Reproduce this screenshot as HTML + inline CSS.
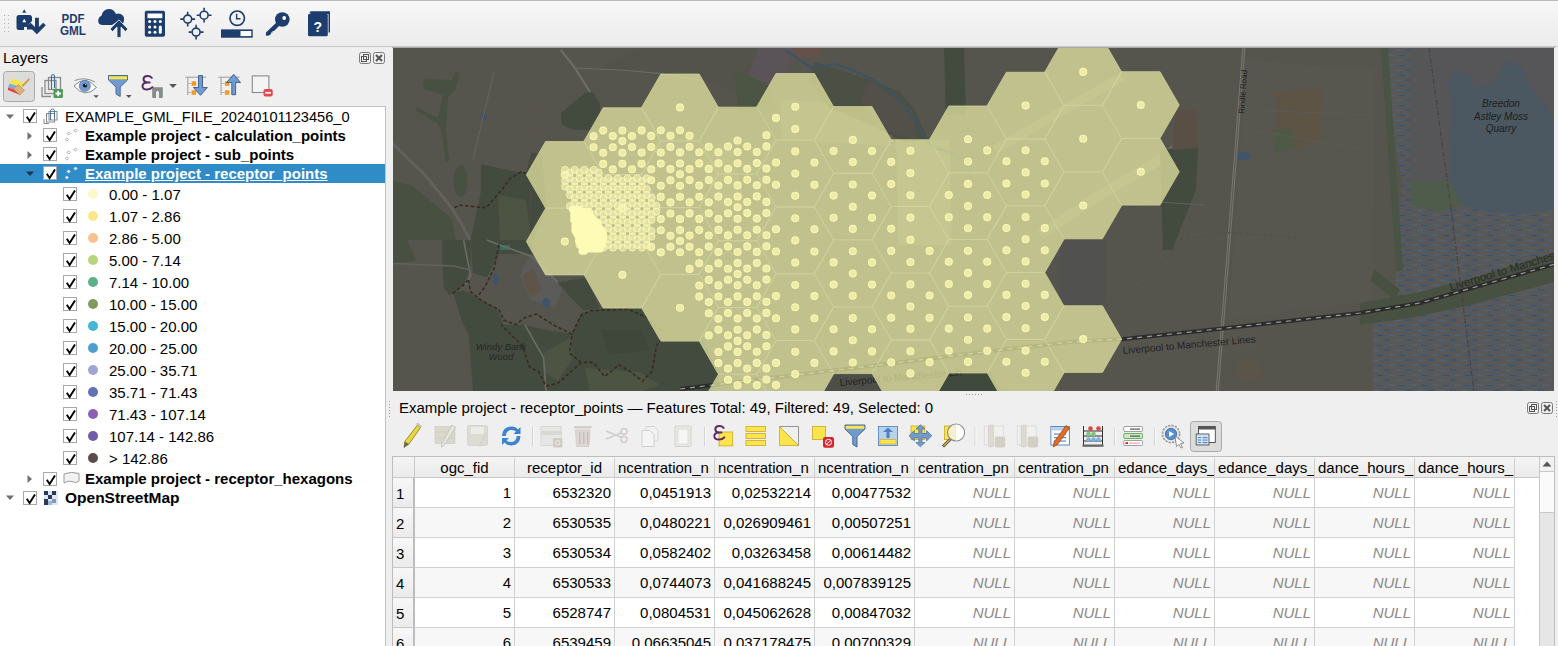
<!DOCTYPE html><html><head><meta charset="utf-8"><style>
*{margin:0;padding:0;box-sizing:border-box}
html,body{width:1558px;height:646px;overflow:hidden;background:#efefef;font-family:"Liberation Sans",sans-serif;color:#000}
.a{position:absolute}
.t{position:absolute;white-space:nowrap;font-size:15px;line-height:18px}
.b{font-weight:bold}
.cb{position:absolute;width:14px;height:14px;border:1px solid #a9a9a9;background:#fff}
.cb svg{position:absolute;left:1px;top:1px}
.lg{position:absolute;width:11px;height:11px;border-radius:50%}
.hc{position:absolute;top:0;height:20px;border-right:1px solid #cfcfcf;overflow:hidden;white-space:nowrap;font-size:15px;line-height:20px}
.cell{position:absolute;height:30px;border-right:1px solid #d0d0d0;border-bottom:1px solid #d0d0d0;font-size:15px;line-height:30px;text-align:right;padding-right:4px;white-space:nowrap;overflow:hidden}
.nul{color:#8b8b8b;font-style:italic}
</style></head><body>
<div class="a" style="left:0;top:0;width:1558px;height:47px;background:linear-gradient(#f7f7f7,#ececec);border-top:1px solid #bcbcbc;border-bottom:1px solid #c8c8c8"></div>
<svg class="a" style="left:0;top:0" width="340" height="46" viewBox="0 0 340 46"><rect x="4" y="15" width="1" height="1" fill="#b0b0b0"/><rect x="8" y="15" width="1" height="1" fill="#b0b0b0"/><rect x="4" y="19" width="1" height="1" fill="#b0b0b0"/><rect x="8" y="19" width="1" height="1" fill="#b0b0b0"/><rect x="4" y="23" width="1" height="1" fill="#b0b0b0"/><rect x="8" y="23" width="1" height="1" fill="#b0b0b0"/><rect x="4" y="27" width="1" height="1" fill="#b0b0b0"/><rect x="8" y="27" width="1" height="1" fill="#b0b0b0"/><rect x="4" y="31" width="1" height="1" fill="#b0b0b0"/><rect x="8" y="31" width="1" height="1" fill="#b0b0b0"/><path d="M22.3 12.7 L24.2 9.2 L26.2 12.7Z" fill="#1c3d6e"/><path d="M19 15 H29.5 Q32 15 32 18 V21 L28.5 24.5 L33 29.5 H27 V27 H24 V30 H19 Q16.5 30 16.5 27.5 V17.5 Q16.5 15 19 15Z" fill="#1c3d6e"/><path d="M22.3 22.3 L24.2 18.8 L26.2 22.3Z" fill="#fff"/><path d="M35 17.7 H38.9 V27 L43.2 22.7 L45.8 25.3 L36.9 34.2 L28 25.3 L30.6 22.7 L35 27Z" fill="#1c3d6e"/><text x="73" y="22.7" font-family="Liberation Sans" font-weight="bold" font-size="12.5" fill="#1c3d6e" text-anchor="middle" textLength="23" lengthAdjust="spacingAndGlyphs">PDF</text><text x="73" y="34.7" font-family="Liberation Sans" font-weight="bold" font-size="12.5" fill="#1c3d6e" text-anchor="middle" textLength="26" lengthAdjust="spacingAndGlyphs">GML</text><path d="M103 25 Q98 25 98.2 20.5 Q98.5 17 101.5 15.7 Q103 9 108.8 8.9 Q114 9 116 14 Q118 13.2 120.5 14 Q124.5 15.5 124 20 Q123.8 23 122 24 L118.9 20.5 L112 25Z" fill="#1c3d6e"/><path d="M117 37.4 H121 V27 L125.3 31.6 L128 29 L118.9 19.8 L110 29 L112.6 31.6 L117 27Z" fill="#1c3d6e" stroke="#f3f3f3" stroke-width="0.8"/><rect x="144.8" y="10.8" width="20.2" height="25.9" rx="1.8" fill="#1c3d6e"/><rect x="147.5" y="13.5" width="14.8" height="4.7" fill="#fff"/><circle cx="149.6" cy="21.6" r="1.5" fill="#fff"/><circle cx="155.0" cy="21.6" r="1.5" fill="#fff"/><circle cx="149.6" cy="27.0" r="1.5" fill="#fff"/><circle cx="155.0" cy="27.0" r="1.5" fill="#fff"/><circle cx="149.6" cy="32.2" r="1.5" fill="#fff"/><circle cx="155.0" cy="32.2" r="1.5" fill="#fff"/><circle cx="160.3" cy="21.6" r="1.5" fill="#fff"/><rect x="158.8" y="25.6" width="3" height="8.2" rx="1.5" fill="#fff"/><circle cx="187.7" cy="19.1" r="4" fill="none" stroke="#1c3d6e" stroke-width="1.6"/><path d="M180.3 19.1 h3 M192.1 19.1 h3 M187.7 11.7 v3 M187.7 23.5 v3" stroke="#1c3d6e" stroke-width="1.6"/><circle cx="204.1" cy="15.2" r="4" fill="none" stroke="#1c3d6e" stroke-width="1.6"/><path d="M196.7 15.2 h3 M208.5 15.2 h3 M204.1 7.8 v3 M204.1 19.6 v3" stroke="#1c3d6e" stroke-width="1.6"/><circle cx="196.1" cy="32.1" r="4" fill="none" stroke="#1c3d6e" stroke-width="1.6"/><path d="M188.7 32.1 h3 M200.5 32.1 h3 M196.1 24.7 v3 M196.1 36.5 v3" stroke="#1c3d6e" stroke-width="1.6"/><circle cx="237.2" cy="18.2" r="7.2" fill="none" stroke="#1c3d6e" stroke-width="1.7"/><path d="M236.6 13.8 V18.8 H240.5" fill="none" stroke="#1c3d6e" stroke-width="1.4"/><rect x="221" y="29.4" width="31.7" height="8.3" fill="#1c3d6e"/><rect x="240.5" y="31" width="10.8" height="5.1" fill="#fff"/><circle cx="282.3" cy="19.5" r="7.3" fill="#1c3d6e"/><circle cx="284.2" cy="18" r="1.9" fill="#fff"/><path d="M277.5 21.5 L280.5 24.5 L274 31 L272.5 31 L272.5 32.5 L271 32.5 L271 34 L268.5 35.8 L265.8 35.5 L266 32.5Z" fill="#1c3d6e"/><path d="M309.5 12.2 Q310 11.3 311.5 11.3 H330 V32.5 H328.5 V14 H311 Z" fill="#1c3d6e"/><rect x="308" y="13.8" width="19.8" height="22.5" rx="1.5" fill="#1c3d6e"/><text x="317.8" y="31.5" font-family="Liberation Sans" font-weight="bold" font-size="14" fill="#fff" text-anchor="middle">?</text></svg>
<div class="t" style="left:3px;top:49px;font-size:15px;line-height:18px">Layers</div>
<svg class="a" style="left:359px;top:52px" width="26" height="13" viewBox="0 0 26 13"><rect x="0.5" y="0.5" width="11" height="11" rx="2" fill="none" stroke="#7a7a7a"/><rect x="2.5" y="4.5" width="5" height="5" fill="none" stroke="#555"/><rect x="4.5" y="2.5" width="5" height="5" fill="none" stroke="#555"/><rect x="14.5" y="0.5" width="11" height="11" rx="2" fill="none" stroke="#7a7a7a"/><path d="M17 3 L23 9 M23 3 L17 9" stroke="#555" stroke-width="2"/></svg>
<svg class="a" style="left:0;top:66px" width="290" height="40" viewBox="0 66 290 40"><rect x="3.5" y="71.5" width="31" height="30" rx="3" fill="#dcdcdc" stroke="#a9a9a9"/><path d="M12 78.6 L23 82 L20.5 87 L9.5 83.5Z" fill="#f2e64c"/><path d="M9.5 83.5 L20.5 87 L18.5 91 L8 87.5Z" fill="#86a9d6"/><path d="M8 87.5 L18.5 91 L19.5 94.8 L8 90Z" fill="#e8403d"/><path d="M28.8 78.2 L30 79.5 L23 87 L21.5 85.5Z" fill="#d49a45"/><path d="M18.5 84.5 L24.5 90.5 L19.8 95 L13.5 89Z" fill="#d8b27a" stroke="#b88a4a" stroke-width="0.6"/><path d="M42 87 V96.5 H51" fill="none" stroke="#8a8a8a" stroke-width="1.3"/><rect x="45" y="80.5" width="11" height="13" fill="none" stroke="#8a8a8a" stroke-width="1.3"/><rect x="48.5" y="77.5" width="12" height="12" fill="none" stroke="#8a8a8a" stroke-width="1.3"/><path d="M51.5 89 V76.5 Q51.5 74.5 53 74.5 Q54.5 74.5 54.5 76.5 V88" fill="none" stroke="#3e6a9c" stroke-width="1.1"/><rect x="53.5" y="89" width="9.4" height="9" rx="1.2" fill="#4c9a55"/><path d="M58.2 90.8 V96.3 M55.5 93.5 H61" stroke="#fff" stroke-width="1.8"/><path d="M74 86 Q85 74 96.5 87.5 Q85 99 74 86Z" fill="#fff" stroke="#777" stroke-width="0.9"/><path d="M74.5 80.5 Q85 76.5 95 82" fill="none" stroke="#777" stroke-width="0.8"/><circle cx="84.8" cy="85.9" r="5.6" fill="#6f9bd2" stroke="#4a6e9c" stroke-width="0.6"/><circle cx="85" cy="85.5" r="2.1" fill="#111"/><circle cx="85.7" cy="84.7" r="0.6" fill="#fff"/><path d="M93.4 95.2 H98.8 L96.1 98Z" fill="#555"/><path d="M108.5 75.5 H127.5 V80 L120.2 87 V96.5 L116 94 V87 L108.5 80Z" fill="#6f9bd2" stroke="#3f5f8a" stroke-width="0.9"/><rect x="109" y="76.3" width="18" height="3" fill="#f5e74a"/><path d="M126 95 H131.6 L128.8 98Z" fill="#555"/><path d="M152.2 87.2 H162.8 V97 Q162.8 98 161.8 98 H159 V92 L157.5 90.5 L156 92 V98 H153.2 Q152.2 98 152.2 97Z" fill="#888c88"/><path transform="translate(141.5,75.2) scale(1.000,1.000)" d="M10.3 2.6 Q8.5 0.6 5.8 0.8 Q2 1 2 4.2 Q2.2 7 6 7.3 H8.2 M6 7.3 Q1 7.4 1 11 Q1.2 14.3 5.6 14.3 Q9 14.3 11 12" fill="none" stroke="#5b2a66" stroke-width="2" stroke-linecap="round"/><path d="M169.1 84 H176.8 L173 88Z" fill="#555"/><path d="M185.3 77.2 H206.3 M187.8 77.5 V95" stroke="#9a9a9a" stroke-width="1"/><path d="M187.8 83.5 H191.3 M187.8 92.5 H191.3" stroke="#b0b0b0" stroke-width="0.8"/><rect x="191.6" y="81.3" width="4.5" height="4.5" fill="#f59a1e"/><rect x="191.6" y="90.3" width="4.5" height="4.5" fill="#f59a1e"/><path d="M218.6 77.2 H239.6 M221.1 77.5 V95" stroke="#9a9a9a" stroke-width="1"/><path d="M221.1 83.5 H224.6 M221.1 92.5 H224.6" stroke="#b0b0b0" stroke-width="0.8"/><rect x="224.9" y="81.3" width="4.5" height="4.5" fill="#f59a1e"/><rect x="224.9" y="90.3" width="4.5" height="4.5" fill="#f59a1e"/><path d="M198.5 75.6 H202.5 V87.5 H207.4 L200.5 95.3 L193.4 87.5 H198.5Z" fill="#6f9bd2" stroke="#3a5a80" stroke-width="0.9"/><path d="M231.8 94.7 H235.6 V82.5 H240.6 L233.7 74.3 L226.6 82.5 H231.8Z" fill="#6f9bd2" stroke="#3a5a80" stroke-width="0.9"/><rect x="252.3" y="75.9" width="16.6" height="16.6" fill="#f4f4f4" stroke="#8a8a8a" stroke-width="1.1"/><rect x="263.5" y="89" width="9.2" height="7.6" rx="2" fill="#e8454c"/><rect x="265.3" y="91.9" width="5.6" height="1.8" fill="#fff"/></svg>
<div class="a" style="left:0;top:106px;width:386px;height:540px;background:#fff;border-top:1px solid #c2c2c2;border-right:1px solid #c2c2c2"></div>
<svg class="a" style="left:6px;top:114px" width="9" height="6"><path d="M0 0.5 H8 L4 5Z" fill="#6f6f6f"/></svg><div class="cb" style="left:23px;top:109px"><svg width="12" height="12" viewBox="0 0 12 12"><path d="M1.8 5.8 L4.6 10 L10 1.4" fill="none" stroke="#000" stroke-width="1.9" stroke-linejoin="miter"/></svg></div><svg class="a" style="left:43px;top:108px" width="15" height="16" viewBox="0 0 15 16"><path d="M1 11 V15.5 H6" fill="none" stroke="#888" stroke-width="1"/><rect x="3.5" y="5.5" width="8" height="8.5" fill="none" stroke="#888"/><rect x="6" y="3.5" width="8" height="8.5" fill="none" stroke="#888"/><path d="M7.5 12 V3 Q7.5 1 9.5 1 Q11.5 1 11.5 3 V10.5" fill="none" stroke="#3e6a9c" stroke-width="0.9"/></svg><div class="t" style="left:65px;top:108px;font-size:14.6px">EXAMPLE_GML_FILE_20240101123456_0</div><svg class="a" style="left:27px;top:132px" width="6" height="9"><path d="M0.5 0 V8 L5 4Z" fill="#6f6f6f"/></svg><div class="cb" style="left:43px;top:128px"><svg width="12" height="12" viewBox="0 0 12 12"><path d="M1.8 5.8 L4.6 10 L10 1.4" fill="none" stroke="#000" stroke-width="1.9" stroke-linejoin="miter"/></svg></div><svg class="a" style="left:65px;top:128px" width="14" height="14" viewBox="0 0 14 14"><path d="M10.5 0.9 l1.6 1.6 l-1.6 1.6 l-1.6 -1.6Z" fill="#fff" stroke="#888" stroke-width="0.7"/><path d="M3.6 3.9 l1.6 1.6 l-1.6 1.6 l-1.6 -1.6Z" fill="#fff" stroke="#888" stroke-width="0.7"/><path d="M1.8 9.9 l1.6 1.6 l-1.6 1.6 l-1.6 -1.6Z" fill="#fff" stroke="#888" stroke-width="0.7"/></svg><div class="t b" style="left:85px;top:127px;font-size:15px">Example project - calculation_points</div><svg class="a" style="left:27px;top:151px" width="6" height="9"><path d="M0.5 0 V8 L5 4Z" fill="#6f6f6f"/></svg><div class="cb" style="left:43px;top:147px"><svg width="12" height="12" viewBox="0 0 12 12"><path d="M1.8 5.8 L4.6 10 L10 1.4" fill="none" stroke="#000" stroke-width="1.9" stroke-linejoin="miter"/></svg></div><svg class="a" style="left:65px;top:147px" width="14" height="14" viewBox="0 0 14 14"><path d="M10.5 0.9 l1.6 1.6 l-1.6 1.6 l-1.6 -1.6Z" fill="#fff" stroke="#888" stroke-width="0.7"/><path d="M3.6 3.9 l1.6 1.6 l-1.6 1.6 l-1.6 -1.6Z" fill="#fff" stroke="#888" stroke-width="0.7"/><path d="M1.8 9.9 l1.6 1.6 l-1.6 1.6 l-1.6 -1.6Z" fill="#fff" stroke="#888" stroke-width="0.7"/></svg><div class="t b" style="left:85px;top:146px;font-size:15px">Example project - sub_points</div><div class="a" style="left:0;top:164px;width:385px;height:19px;background:#308cc6"></div><svg class="a" style="left:26px;top:171px" width="9" height="6"><path d="M0 0.5 H8 L4 5Z" fill="#1d3650"/></svg><div class="cb" style="left:43px;top:166px"><svg width="12" height="12" viewBox="0 0 12 12"><path d="M1.8 5.8 L4.6 10 L10 1.4" fill="none" stroke="#000" stroke-width="1.9" stroke-linejoin="miter"/></svg></div><svg class="a" style="left:65px;top:166px" width="14" height="14" viewBox="0 0 14 14"><path d="M10.5 0.9 l1.6 1.6 l-1.6 1.6 l-1.6 -1.6Z" fill="#e8e8e8" stroke="#e8e8e8" stroke-width="0.7"/><path d="M3.6 3.9 l1.6 1.6 l-1.6 1.6 l-1.6 -1.6Z" fill="#e8e8e8" stroke="#e8e8e8" stroke-width="0.7"/><path d="M1.8 9.9 l1.6 1.6 l-1.6 1.6 l-1.6 -1.6Z" fill="#e8e8e8" stroke="#e8e8e8" stroke-width="0.7"/></svg><div class="t b" style="left:85px;top:165px;font-size:15px;color:#fff;text-decoration:underline">Example project - receptor_points</div><div class="cb" style="left:63px;top:187px"><svg width="12" height="12" viewBox="0 0 12 12"><path d="M1.8 5.8 L4.6 10 L10 1.4" fill="none" stroke="#000" stroke-width="1.9" stroke-linejoin="miter"/></svg></div><div class="lg" style="left:88px;top:189px;width:10px;height:10px;background:#fdf9c9"></div><div class="t" style="left:109px;top:186px;font-size:15px">0.00 - 1.07</div><div class="cb" style="left:63px;top:209px"><svg width="12" height="12" viewBox="0 0 12 12"><path d="M1.8 5.8 L4.6 10 L10 1.4" fill="none" stroke="#000" stroke-width="1.9" stroke-linejoin="miter"/></svg></div><div class="lg" style="left:88px;top:211px;width:10px;height:10px;background:#fce68c"></div><div class="t" style="left:109px;top:208px;font-size:15px">1.07 - 2.86</div><div class="cb" style="left:63px;top:231px"><svg width="12" height="12" viewBox="0 0 12 12"><path d="M1.8 5.8 L4.6 10 L10 1.4" fill="none" stroke="#000" stroke-width="1.9" stroke-linejoin="miter"/></svg></div><div class="lg" style="left:88px;top:233px;width:10px;height:10px;background:#f7c190"></div><div class="t" style="left:109px;top:230px;font-size:15px">2.86 - 5.00</div><div class="cb" style="left:63px;top:253px"><svg width="12" height="12" viewBox="0 0 12 12"><path d="M1.8 5.8 L4.6 10 L10 1.4" fill="none" stroke="#000" stroke-width="1.9" stroke-linejoin="miter"/></svg></div><div class="lg" style="left:88px;top:255px;width:10px;height:10px;background:#b6d67c"></div><div class="t" style="left:109px;top:252px;font-size:15px">5.00 - 7.14</div><div class="cb" style="left:63px;top:275px"><svg width="12" height="12" viewBox="0 0 12 12"><path d="M1.8 5.8 L4.6 10 L10 1.4" fill="none" stroke="#000" stroke-width="1.9" stroke-linejoin="miter"/></svg></div><div class="lg" style="left:88px;top:277px;width:10px;height:10px;background:#5bb08a"></div><div class="t" style="left:109px;top:274px;font-size:15px">7.14 - 10.00</div><div class="cb" style="left:63px;top:297px"><svg width="12" height="12" viewBox="0 0 12 12"><path d="M1.8 5.8 L4.6 10 L10 1.4" fill="none" stroke="#000" stroke-width="1.9" stroke-linejoin="miter"/></svg></div><div class="lg" style="left:88px;top:299px;width:10px;height:10px;background:#7f9b5f"></div><div class="t" style="left:109px;top:296px;font-size:15px">10.00 - 15.00</div><div class="cb" style="left:63px;top:319px"><svg width="12" height="12" viewBox="0 0 12 12"><path d="M1.8 5.8 L4.6 10 L10 1.4" fill="none" stroke="#000" stroke-width="1.9" stroke-linejoin="miter"/></svg></div><div class="lg" style="left:88px;top:321px;width:10px;height:10px;background:#45b5d8"></div><div class="t" style="left:109px;top:318px;font-size:15px">15.00 - 20.00</div><div class="cb" style="left:63px;top:341px"><svg width="12" height="12" viewBox="0 0 12 12"><path d="M1.8 5.8 L4.6 10 L10 1.4" fill="none" stroke="#000" stroke-width="1.9" stroke-linejoin="miter"/></svg></div><div class="lg" style="left:88px;top:343px;width:10px;height:10px;background:#4e9ed2"></div><div class="t" style="left:109px;top:340px;font-size:15px">20.00 - 25.00</div><div class="cb" style="left:63px;top:363px"><svg width="12" height="12" viewBox="0 0 12 12"><path d="M1.8 5.8 L4.6 10 L10 1.4" fill="none" stroke="#000" stroke-width="1.9" stroke-linejoin="miter"/></svg></div><div class="lg" style="left:88px;top:365px;width:10px;height:10px;background:#a0a3d5"></div><div class="t" style="left:109px;top:362px;font-size:15px">25.00 - 35.71</div><div class="cb" style="left:63px;top:385px"><svg width="12" height="12" viewBox="0 0 12 12"><path d="M1.8 5.8 L4.6 10 L10 1.4" fill="none" stroke="#000" stroke-width="1.9" stroke-linejoin="miter"/></svg></div><div class="lg" style="left:88px;top:387px;width:10px;height:10px;background:#6173b4"></div><div class="t" style="left:109px;top:384px;font-size:15px">35.71 - 71.43</div><div class="cb" style="left:63px;top:407px"><svg width="12" height="12" viewBox="0 0 12 12"><path d="M1.8 5.8 L4.6 10 L10 1.4" fill="none" stroke="#000" stroke-width="1.9" stroke-linejoin="miter"/></svg></div><div class="lg" style="left:88px;top:409px;width:10px;height:10px;background:#8b60b5"></div><div class="t" style="left:109px;top:406px;font-size:15px">71.43 - 107.14</div><div class="cb" style="left:63px;top:429px"><svg width="12" height="12" viewBox="0 0 12 12"><path d="M1.8 5.8 L4.6 10 L10 1.4" fill="none" stroke="#000" stroke-width="1.9" stroke-linejoin="miter"/></svg></div><div class="lg" style="left:88px;top:431px;width:10px;height:10px;background:#6e5da8"></div><div class="t" style="left:109px;top:428px;font-size:15px">107.14 - 142.86</div><div class="cb" style="left:63px;top:451px"><svg width="12" height="12" viewBox="0 0 12 12"><path d="M1.8 5.8 L4.6 10 L10 1.4" fill="none" stroke="#000" stroke-width="1.9" stroke-linejoin="miter"/></svg></div><div class="lg" style="left:88px;top:453px;width:10px;height:10px;background:#5d4d4a"></div><div class="t" style="left:109px;top:450px;font-size:15px">&gt; 142.86</div><svg class="a" style="left:27px;top:475px" width="6" height="9"><path d="M0.5 0 V8 L5 4Z" fill="#6f6f6f"/></svg><div class="cb" style="left:43px;top:472px"><svg width="12" height="12" viewBox="0 0 12 12"><path d="M1.8 5.8 L4.6 10 L10 1.4" fill="none" stroke="#000" stroke-width="1.9" stroke-linejoin="miter"/></svg></div><svg class="a" style="left:63px;top:472px" width="17" height="13" viewBox="0 0 17 13"><path d="M1 2 Q8 -1 16 1.5 V9 Q13 12 9 9.5 Q5 8 1 11Z" fill="#f2f2f2" stroke="#9a9a9a" stroke-width="1"/></svg><div class="t b" style="left:85px;top:470px;font-size:15px">Example project - receptor_hexagons</div><svg class="a" style="left:6px;top:495px" width="9" height="6"><path d="M0 0.5 H8 L4 5Z" fill="#6f6f6f"/></svg><div class="cb" style="left:23px;top:491px"><svg width="12" height="12" viewBox="0 0 12 12"><path d="M1.8 5.8 L4.6 10 L10 1.4" fill="none" stroke="#000" stroke-width="1.9" stroke-linejoin="miter"/></svg></div><svg class="a" style="left:44px;top:491px" width="14" height="14" viewBox="0 0 14 14"><rect x="0" y="0" width="14" height="14" fill="#dfe8f2"/><rect x="0" y="0" width="4" height="4" fill="#2a3b5a"/><rect x="8" y="0" width="4" height="4" fill="#2a3b5a"/><rect x="4" y="4" width="4" height="4" fill="#2a3b5a"/><rect x="0" y="8" width="4" height="6" fill="#2a3b5a"/><rect x="8" y="8" width="4" height="4" fill="#7a98c0"/><rect x="4" y="10" width="4" height="4" fill="#9fb6d6"/></svg><div class="t b" style="left:65px;top:489px;font-size:15.5px">OpenStreetMap</div>
<div class="a" style="left:393px;top:48px;width:1161px;height:343px;overflow:hidden"><svg width="1161" height="343" viewBox="0 0 1161 343" style="position:absolute;left:0;top:0">
<defs><pattern id="marsh" width="22" height="10" patternUnits="userSpaceOnUse"><rect width="22" height="10" fill="#585858"/><line x1="1" y1="2" x2="7" y2="2" stroke="#2a5282" stroke-width="1.1"/><line x1="12" y1="2.5" x2="18" y2="2.5" stroke="#4e6479" stroke-width="1.1"/><line x1="6" y1="7" x2="12" y2="7" stroke="#4e6479" stroke-width="1.1"/><line x1="16" y1="7.5" x2="22" y2="7.5" stroke="#2a5282" stroke-width="1.1"/></pattern><clipPath id="mc"><rect width="1161" height="343"/></clipPath></defs>
<rect width="1161" height="343" fill="#55554e"/>
<polygon points="852.0,12.0 982.0,22.0 979.0,252.0 835.0,272.0 847.0,102.0" fill="#57574f"/>
<polygon points="247.0,0.0 367.0,0.0 357.0,47.0 307.0,32.0 207.0,20.0" fill="#53534c"/>
<path d="M30.0,34.0 33.0,31.0 59.0,32.0 62.0,24.0 67.0,25.0 63.0,40.0 55.0,49.0 53.0,82.0 56.0,112.0 53.0,115.0 48.0,82.0 45.0,76.0 23.0,63.0 25.0,60.0 45.0,70.0 50.0,47.0 31.0,41.0 Z" fill="#475041"/>
<polygon points="168.0,65.0 192.0,45.0 200.0,44.0 207.0,56.0 207.0,82.0 182.0,82.0 169.0,77.0" fill="#434b3f"/>
<ellipse cx="67.5" cy="133.0" rx="7" ry="16" fill="#475041"/>
<circle cx="90.6" cy="69.3" r="3.2" fill="#3f5468"/>
<polygon points="0.0,133.0 18.6,137.2 58.6,170.5 63.0,192.0 49.0,192.0 0.0,192.0" fill="#475041"/>
<polygon points="87.9,115.9 117.2,122.5 133.2,125.2 138.5,103.9 149.2,106.6 153.2,159.8 141.2,192.0 77.6,192.0 87.9,143.8" fill="#434b3f"/>
<polygon points="105.0,147.0 133.0,152.0 138.0,192.0 107.0,192.0" fill="#4d5444"/>
<polygon points="0.0,192.0 14.0,192.0 23.5,213.0 0.0,215.5" fill="#475041"/>
<polygon points="49.4,192.0 77.6,192.0 77.6,220.2 70.6,236.7 56.5,247.3 50.6,239.0 49.4,215.5" fill="#434b3f"/>
<polygon points="77.6,192.0 138.8,192.0 141.2,206.0 105.9,206.0 94.0,229.6 80.0,225.0" fill="#434b3f"/>
<polygon points="164.7,234.4 193.0,229.6 207.0,260.2 190.6,262.6 178.8,250.8" fill="#434b3f"/>
<polygon points="60.0,243.8 70.6,242.6 103.5,260.2 110.6,276.7 131.8,276.7 150.6,281.4 178.8,286.1 188.2,265.0 211.8,260.2 249.4,261.4 268.2,293.2 310.6,293.2 327.0,326.1 320.0,344.0 80.0,344.0 77.6,309.6 75.3,286.1 69.4,274.4 61.2,248.5" fill="#434b3f"/>
<polygon points="150.6,305.0 178.8,288.5 178.8,312.0 164.7,333.0 150.6,323.8" fill="#4d5444"/>
<polygon points="192.0,320.0 247.0,324.0 267.0,337.0 247.0,344.0 197.0,344.0" fill="#4d5444"/>
<polygon points="207.0,282.0 247.0,282.0 257.0,302.0 217.0,307.0" fill="#3f473b"/>
<polygon points="546.0,344.0 556.5,324.0 597.5,324.0 608.0,344.0" fill="#3f493c"/>
<polygon points="431.0,344.0 441.5,324.0 480.5,324.0 492.0,344.0" fill="#4d4e48"/>
<polygon points="503.0,92.0 557.0,92.0 559.0,197.0 505.0,197.0" fill="#67675d"/>
<polygon points="387.0,52.0 497.0,56.0 500.0,98.0 389.0,92.0" fill="#646459"/>
<polyline points="602.0,102.0 667.0,64.0 729.0,29.0" fill="none" stroke="#6a6a5f" stroke-width="9.0" stroke-linejoin="round"/>
<polyline points="647.0,187.0 707.0,147.0 767.0,112.0 787.0,97.0" fill="none" stroke="#67675d" stroke-width="10.0" stroke-linejoin="round"/>
<polygon points="307.0,102.0 337.0,92.0 352.0,152.0 322.0,167.0" fill="#5f6155"/>
<polygon points="135.0,210.0 152.0,214.0 169.0,242.0 162.0,260.0 137.0,252.0 127.0,227.0" fill="#5b5b5a"/>
<polygon points="129.0,228.0 140.0,220.0 149.0,242.0 137.0,250.0" fill="#5f5448"/>
<ellipse cx="103.0" cy="231.0" rx="3" ry="6" fill="#3f5468"/>
<ellipse cx="153.0" cy="255.0" rx="4" ry="5" fill="#3f5468"/>
<rect x="107.0" y="197.0" width="10" height="5" fill="#3d6b5a"/>
<polygon points="365.0,0.0 402.0,0.0 394.0,22.0 377.0,37.0 359.0,44.0 355.0,30.0" fill="#5a5459"/>
<polygon points="342.0,22.0 377.0,37.0 382.0,62.0 345.0,64.0" fill="#4c5444"/>
<polygon points="422.0,14.0 477.0,32.0 507.0,44.0 522.0,62.0 535.0,92.0 512.0,94.0 472.0,74.0 437.0,60.0 415.0,34.0" fill="#4b4f44"/>
<polygon points="477.0,32.0 519.0,62.0 525.0,92.0 487.0,82.0 467.0,52.0" fill="#525049"/>
<polyline points="392.0,2.0 404.0,10.0 419.0,20.0 442.0,16.0 459.0,22.0 477.0,30.0 493.0,40.0 507.0,53.0 519.0,68.0 529.0,86.0 542.0,100.0 557.0,104.0 572.0,115.0 579.0,130.0" fill="none" stroke="#3b5366" stroke-width="2.0" stroke-linejoin="round"/>
<polygon points="551.0,0.0 571.0,0.0 573.0,67.0 553.0,67.0" fill="#434b3f"/>
<polygon points="399.0,0.0 429.0,0.0 425.0,9.0 405.0,10.0" fill="#66514a"/>
<polygon points="767.0,102.0 805.0,98.0 803.0,142.0 779.0,202.0 770.0,202.0" fill="#434b3f"/>
<polygon points="783.0,62.0 803.0,62.0 805.0,100.0 779.0,102.0" fill="#5a4f45"/>
<polygon points="883.0,44.0 929.0,40.0 927.0,92.0 907.0,102.0 883.0,92.0" fill="#5d5445"/>
<polygon points="879.0,82.0 899.0,80.0 902.0,102.0 882.0,104.0" fill="#4e5a45"/>
<ellipse cx="850.0" cy="108.0" rx="8" ry="4" fill="#3f566a"/>
<polygon points="667.0,191.0 713.0,191.0 713.0,257.0 667.0,257.0" fill="#515150"/>
<polygon points="837.0,280.0 862.0,274.0 867.0,302.0 839.0,304.0" fill="#56564e"/>
<polygon points="842.0,314.0 867.0,310.0 869.0,332.0 844.0,334.0" fill="#5b5448"/>
<polygon points="988.0,0.0 1017.6,0.0 1017.6,133.0 1160.0,133.0 1160.0,344.0 980.0,344.0 980.0,266.0 1002.0,242.0 1009.0,133.0" fill="url(#marsh)"/>
<polygon points="1017.6,0.0 1161.0,0.0 1161.0,133.0 1017.6,133.0" fill="#565658"/>
<path d="M1055.0,32.0 1065.0,22.0 1077.0,28.0 1083.0,40.0 1099.0,35.0 1107.0,24.0 1115.0,12.0 1129.0,20.0 1137.0,38.0 1152.0,56.0 1161.0,72.0 1161.0,162.0 1127.0,166.0 1097.0,164.0 1069.0,157.0 1057.0,132.0 1057.0,92.0 1059.0,62.0 Z" fill="#4b5761"/>
<polygon points="1017.0,133.0 1057.0,133.0 1069.0,157.0 1047.0,164.0 1019.0,157.0" fill="#505c4b"/>
<polygon points="988.0,0.0 995.0,0.0 1010.0,223.0 1003.0,223.0" fill="#4a5445"/>
<polygon points="967.0,255.5 1027.0,244.0 1087.0,228.0 1161.0,204.0 1161.0,234.0 1077.0,257.0 1017.0,270.0 967.0,276.7" fill="#475041"/>
<polygon points="982.0,222.0 1007.0,242.0 1002.0,252.0 977.0,232.0" fill="#475041"/>
<polyline points="1036.0,0.0 1057.0,152.0 1081.0,344.0" fill="none" stroke="#4a3c42" stroke-width="1.2" stroke-dasharray="5,2,1.5,2" stroke-opacity="0.9" stroke-linejoin="round"/>
<polyline points="850.8,0.0 843.0,102.0 833.0,232.0 824.2,344.0" fill="none" stroke="#777771" stroke-width="3.2" stroke-linejoin="round"/>
<polyline points="850.8,0.0 843.0,102.0 833.0,232.0 824.2,344.0" fill="none" stroke="#57574f" stroke-width="1.0" stroke-linejoin="round"/>
<polyline points="0.0,95.9 32.0,127.0 58.6,159.8 69.3,177.0 77.0,192.0" fill="none" stroke="#6c6c67" stroke-width="2.2" stroke-linejoin="round"/>
<polyline points="0.0,95.9 32.0,127.0 58.6,159.8 69.3,177.0 77.0,192.0" fill="none" stroke="#55554e" stroke-width="0.8" stroke-linejoin="round"/>
<polyline points="167.8,2.0 181.0,18.6 197.0,44.0" fill="none" stroke="#6c6c67" stroke-width="2.2" stroke-linejoin="round"/>
<polyline points="181.0,20.0 227.0,22.0 266.4,25.3 307.0,32.0" fill="none" stroke="#6c6c67" stroke-width="1.2" stroke-linejoin="round"/>
<polyline points="101.0,24.0 79.9,111.9" fill="none" stroke="#66665f" stroke-width="0.9" stroke-linejoin="round"/>
<polyline points="70.6,192.0 77.6,227.3 73.0,236.7" fill="none" stroke="#6c6c67" stroke-width="1.6" stroke-linejoin="round"/>
<polyline points="94.0,192.0 105.9,196.7 138.8,208.5 164.7,234.4" fill="none" stroke="#6c6c67" stroke-width="1.6" stroke-linejoin="round"/>
<polyline points="0.0,215.5 61.2,218.0 77.0,222.0" fill="none" stroke="#62625c" stroke-width="1.6" stroke-linejoin="round"/>
<polyline points="131.8,276.7 150.6,309.6 153.0,344.0" fill="none" stroke="#6c6c67" stroke-width="1.6" stroke-linejoin="round"/>
<polyline points="702.0,264.0 757.0,232.0 787.0,192.0 832.0,184.0 907.0,190.0" fill="none" stroke="#505049" stroke-width="1.0" stroke-dasharray="3,3" stroke-linejoin="round"/>
<polyline points="732.0,152.0 812.0,157.0" fill="none" stroke="#62625c" stroke-width="1.0" stroke-linejoin="round"/>
<polyline points="857.0,62.0 977.0,67.0" fill="none" stroke="#5b5b55" stroke-width="1.0" stroke-linejoin="round"/>
<polyline points="857.0,82.0 977.0,102.0" fill="none" stroke="#5b5b55" stroke-width="1.0" stroke-linejoin="round"/>
<polyline points="61.3,159.8 66.6,157.2 93.2,159.8 109.2,141.2 117.2,130.5 127.9,123.9 133.2,125.2" fill="none" stroke="#3a2b1f" stroke-width="1.6" stroke-dasharray="3.5,2.2" stroke-linejoin="round"/>
<polyline points="105.9,196.7 101.2,220.2 91.8,239.0 84.7,248.5" fill="none" stroke="#3a2b1f" stroke-width="1.6" stroke-dasharray="3.5,2.2" stroke-linejoin="round"/>
<polyline points="75.3,232.0 77.6,243.8 89.4,253.2 105.9,261.4 110.6,272.0 122.4,276.7 131.8,269.6 143.5,266.1 160.0,276.7 178.8,286.1 188.2,267.3 197.6,262.6 235.3,261.4 254.1,269.6 267.0,282.0" fill="none" stroke="#3a2b1f" stroke-width="1.6" stroke-dasharray="3.5,2.2" stroke-linejoin="round"/>
<polyline points="178.8,288.5 176.5,305.0 188.2,314.4 200.0,314.4 211.8,328.5 225.9,316.7 237.6,323.8 249.4,333.2 258.8,323.8 263.5,297.9 268.2,290.8" fill="none" stroke="#3a2b1f" stroke-width="1.6" stroke-dasharray="3.5,2.2" stroke-linejoin="round"/>
<polyline points="188.2,314.4 164.7,335.5 153.0,337.9 145.9,323.8 136.5,319.0 129.4,297.9 108.2,276.7" fill="none" stroke="#3a2b1f" stroke-width="1.6" stroke-dasharray="3.5,2.2" stroke-linejoin="round"/>
<polyline points="75.3,232.0 70.6,236.7 58.8,246.1" fill="none" stroke="#3a2b1f" stroke-width="1.6" stroke-dasharray="3.5,2.2" stroke-linejoin="round"/>
<polyline points="130.5,2.7 145.2,42.6 138.5,111.9 137.2,170.5 135.0,192.0" fill="none" stroke="#6a4a4c" stroke-width="1.0" stroke-dasharray="1.5,2.5" stroke-linejoin="round"/>
<polyline points="58.8,246.1 47.0,292.0 33.0,342.6" fill="none" stroke="#6a4a4c" stroke-width="1.0" stroke-dasharray="1.5,2.5" stroke-linejoin="round"/>
<polyline points="332.0,0.0 319.0,37.0 313.0,62.0" fill="none" stroke="#6a4a4c" stroke-width="1.0" stroke-dasharray="1.5,2.5" stroke-linejoin="round"/>
<polyline points="287.0,341.0 457.0,320.5 607.0,302.0 677.0,294.0 731.0,291.0 807.0,283.0 967.0,265.0 1027.0,255.0 1162.0,216.0" fill="none" stroke="#2c2c2c" stroke-width="4.0" stroke-linejoin="round"/>
<polyline points="287.0,341.0 457.0,320.5 607.0,302.0 677.0,294.0 731.0,291.0 807.0,283.0 967.0,265.0 1027.0,255.0 1162.0,216.0" fill="none" stroke="#9a9a96" stroke-width="1.2" stroke-dasharray="5,5" stroke-linejoin="round"/>
<text x="1108.0" y="59.0" font-family="Liberation Sans" font-style="italic" font-size="10" fill="#1e1e1e" text-anchor="middle">Breedon</text>
<text x="1108.0" y="72.0" font-family="Liberation Sans" font-style="italic" font-size="10" fill="#1e1e1e" text-anchor="middle">Astley Moss</text>
<text x="1108.0" y="84.0" font-family="Liberation Sans" font-style="italic" font-size="10" fill="#1e1e1e" text-anchor="middle">Quarry</text>
<text x="108.0" y="302.0" font-family="Liberation Sans" font-style="italic" font-size="9.5" fill="#262626" text-anchor="middle">Windy Bank</text>
<text x="108.0" y="312.0" font-family="Liberation Sans" font-style="italic" font-size="9.5" fill="#262626" text-anchor="middle">Wood</text>
<text transform="translate(730.0,306.0) rotate(-5)" font-family="Liberation Sans" font-size="10" fill="#222">Liverpool to Manchester Lines</text>
<text transform="translate(1058.0,243.0) rotate(-17)" font-family="Liberation Sans" font-size="11.5" fill="#2a2a2a">Liverpool to Manchester L</text>
<text transform="translate(447.0,338.0) rotate(-5)" font-family="Liberation Sans" font-size="10" fill="#222">Liverpool to Manchester Lin</text>
<text transform="translate(851.0,66.0) rotate(-86)" font-family="Liberation Sans" font-size="8" fill="#1e1e1e">Rindle Road</text>
<g opacity="0.74">
<polygon points="133.4,126.8 152.6,93.5 191.0,93.5 210.2,126.8 191.0,160.1 152.6,160.1" fill="#e6e7a2" stroke="#e6e7a2" stroke-width="0.6"/>
<polygon points="133.4,193.6 152.6,160.3 191.0,160.3 210.2,193.6 191.0,226.9 152.6,226.9" fill="#e6e7a2" stroke="#e6e7a2" stroke-width="0.6"/>
<polygon points="191.0,93.1 210.2,59.8 248.6,59.8 267.8,93.1 248.6,126.4 210.2,126.4" fill="#e6e7a2" stroke="#e6e7a2" stroke-width="0.6"/>
<polygon points="191.0,159.9 210.2,126.6 248.6,126.6 267.8,159.9 248.6,193.2 210.2,193.2" fill="#e6e7a2" stroke="#e6e7a2" stroke-width="0.6"/>
<polygon points="191.0,226.7 210.2,193.4 248.6,193.4 267.8,226.7 248.6,260.0 210.2,260.0" fill="#e6e7a2" stroke="#e6e7a2" stroke-width="0.6"/>
<polygon points="248.6,59.4 267.8,26.1 306.2,26.1 325.4,59.4 306.2,92.7 267.8,92.7" fill="#e6e7a2" stroke="#e6e7a2" stroke-width="0.6"/>
<polygon points="248.6,126.2 267.8,92.9 306.2,92.9 325.4,126.2 306.2,159.5 267.8,159.5" fill="#e6e7a2" stroke="#e6e7a2" stroke-width="0.6"/>
<polygon points="248.6,193.0 267.8,159.7 306.2,159.7 325.4,193.0 306.2,226.3 267.8,226.3" fill="#e6e7a2" stroke="#e6e7a2" stroke-width="0.6"/>
<polygon points="248.6,259.8 267.8,226.5 306.2,226.5 325.4,259.8 306.2,293.1 267.8,293.1" fill="#e6e7a2" stroke="#e6e7a2" stroke-width="0.6"/>
<polygon points="306.2,92.5 325.4,59.2 363.8,59.2 383.0,92.5 363.8,125.8 325.4,125.8" fill="#e6e7a2" stroke="#e6e7a2" stroke-width="0.6"/>
<polygon points="306.2,159.3 325.4,126.0 363.8,126.0 383.0,159.3 363.8,192.6 325.4,192.6" fill="#e6e7a2" stroke="#e6e7a2" stroke-width="0.6"/>
<polygon points="306.2,226.1 325.4,192.8 363.8,192.8 383.0,226.1 363.8,259.4 325.4,259.4" fill="#e6e7a2" stroke="#e6e7a2" stroke-width="0.6"/>
<polygon points="306.2,292.9 325.4,259.6 363.8,259.6 383.0,292.9 363.8,326.2 325.4,326.2" fill="#e6e7a2" stroke="#e6e7a2" stroke-width="0.6"/>
<polygon points="306.2,359.7 325.4,326.4 363.8,326.4 383.0,359.7 363.8,393.0 325.4,393.0" fill="#e6e7a2" stroke="#e6e7a2" stroke-width="0.6"/>
<polygon points="363.8,58.8 383.0,25.5 421.4,25.5 440.6,58.8 421.4,92.1 383.0,92.1" fill="#e6e7a2" stroke="#e6e7a2" stroke-width="0.6"/>
<polygon points="363.8,125.6 383.0,92.3 421.4,92.3 440.6,125.6 421.4,158.9 383.0,158.9" fill="#e6e7a2" stroke="#e6e7a2" stroke-width="0.6"/>
<polygon points="363.8,192.4 383.0,159.1 421.4,159.1 440.6,192.4 421.4,225.7 383.0,225.7" fill="#e6e7a2" stroke="#e6e7a2" stroke-width="0.6"/>
<polygon points="363.8,259.2 383.0,225.9 421.4,225.9 440.6,259.2 421.4,292.5 383.0,292.5" fill="#e6e7a2" stroke="#e6e7a2" stroke-width="0.6"/>
<polygon points="363.8,326.0 383.0,292.7 421.4,292.7 440.6,326.0 421.4,359.3 383.0,359.3" fill="#e6e7a2" stroke="#e6e7a2" stroke-width="0.6"/>
<polygon points="421.4,91.9 440.6,58.6 479.0,58.6 498.2,91.9 479.0,125.2 440.6,125.2" fill="#e6e7a2" stroke="#e6e7a2" stroke-width="0.6"/>
<polygon points="421.4,158.7 440.6,125.4 479.0,125.4 498.2,158.7 479.0,192.0 440.6,192.0" fill="#e6e7a2" stroke="#e6e7a2" stroke-width="0.6"/>
<polygon points="421.4,225.5 440.6,192.2 479.0,192.2 498.2,225.5 479.0,258.8 440.6,258.8" fill="#e6e7a2" stroke="#e6e7a2" stroke-width="0.6"/>
<polygon points="421.4,292.3 440.6,259.0 479.0,259.0 498.2,292.3 479.0,325.6 440.6,325.6" fill="#e6e7a2" stroke="#e6e7a2" stroke-width="0.6"/>
<polygon points="479.0,125.0 498.2,91.7 536.6,91.7 555.8,125.0 536.6,158.3 498.2,158.3" fill="#e6e7a2" stroke="#e6e7a2" stroke-width="0.6"/>
<polygon points="479.0,191.8 498.2,158.5 536.6,158.5 555.8,191.8 536.6,225.1 498.2,225.1" fill="#e6e7a2" stroke="#e6e7a2" stroke-width="0.6"/>
<polygon points="479.0,258.6 498.2,225.3 536.6,225.3 555.8,258.6 536.6,291.9 498.2,291.9" fill="#e6e7a2" stroke="#e6e7a2" stroke-width="0.6"/>
<polygon points="479.0,325.4 498.2,292.1 536.6,292.1 555.8,325.4 536.6,358.7 498.2,358.7" fill="#e6e7a2" stroke="#e6e7a2" stroke-width="0.6"/>
<polygon points="536.6,91.3 555.8,58.0 594.2,58.0 613.4,91.3 594.2,124.6 555.8,124.6" fill="#e6e7a2" stroke="#e6e7a2" stroke-width="0.6"/>
<polygon points="536.6,158.1 555.8,124.8 594.2,124.8 613.4,158.1 594.2,191.4 555.8,191.4" fill="#e6e7a2" stroke="#e6e7a2" stroke-width="0.6"/>
<polygon points="536.6,224.9 555.8,191.6 594.2,191.6 613.4,224.9 594.2,258.2 555.8,258.2" fill="#e6e7a2" stroke="#e6e7a2" stroke-width="0.6"/>
<polygon points="536.6,291.7 555.8,258.4 594.2,258.4 613.4,291.7 594.2,325.0 555.8,325.0" fill="#e6e7a2" stroke="#e6e7a2" stroke-width="0.6"/>
<polygon points="594.2,57.6 613.4,24.3 651.8,24.3 671.0,57.6 651.8,90.9 613.4,90.9" fill="#e6e7a2" stroke="#e6e7a2" stroke-width="0.6"/>
<polygon points="594.2,124.4 613.4,91.1 651.8,91.1 671.0,124.4 651.8,157.7 613.4,157.7" fill="#e6e7a2" stroke="#e6e7a2" stroke-width="0.6"/>
<polygon points="594.2,191.2 613.4,157.9 651.8,157.9 671.0,191.2 651.8,224.5 613.4,224.5" fill="#e6e7a2" stroke="#e6e7a2" stroke-width="0.6"/>
<polygon points="594.2,258.0 613.4,224.7 651.8,224.7 671.0,258.0 651.8,291.3 613.4,291.3" fill="#e6e7a2" stroke="#e6e7a2" stroke-width="0.6"/>
<polygon points="594.2,324.8 613.4,291.5 651.8,291.5 671.0,324.8 651.8,358.1 613.4,358.1" fill="#e6e7a2" stroke="#e6e7a2" stroke-width="0.6"/>
<polygon points="651.8,23.9 671.0,-9.4 709.4,-9.4 728.6,23.9 709.4,57.2 671.0,57.2" fill="#e6e7a2" stroke="#e6e7a2" stroke-width="0.6"/>
<polygon points="651.8,90.7 671.0,57.4 709.4,57.4 728.6,90.7 709.4,124.0 671.0,124.0" fill="#e6e7a2" stroke="#e6e7a2" stroke-width="0.6"/>
<polygon points="651.8,157.5 671.0,124.2 709.4,124.2 728.6,157.5 709.4,190.8 671.0,190.8" fill="#e6e7a2" stroke="#e6e7a2" stroke-width="0.6"/>
<polygon points="651.8,291.1 671.0,257.8 709.4,257.8 728.6,291.1 709.4,324.4 671.0,324.4" fill="#e6e7a2" stroke="#e6e7a2" stroke-width="0.6"/>
<polygon points="709.4,57.0 728.6,23.7 767.0,23.7 786.2,57.0 767.0,90.3 728.6,90.3" fill="#e6e7a2" stroke="#e6e7a2" stroke-width="0.6"/>
<polygon points="709.4,123.8 728.6,90.5 767.0,90.5 786.2,123.8 767.0,157.1 728.6,157.1" fill="#e6e7a2" stroke="#e6e7a2" stroke-width="0.6"/>
</g>
<polygon points="133.4,126.8 152.6,93.5 191.0,93.5 210.2,126.8 191.0,160.1 152.6,160.1" fill="none" stroke="#e6e6b0" stroke-opacity="0.35" stroke-width="1"/>
<polygon points="133.4,193.6 152.6,160.3 191.0,160.3 210.2,193.6 191.0,226.9 152.6,226.9" fill="none" stroke="#e6e6b0" stroke-opacity="0.35" stroke-width="1"/>
<polygon points="191.0,93.1 210.2,59.8 248.6,59.8 267.8,93.1 248.6,126.4 210.2,126.4" fill="none" stroke="#e6e6b0" stroke-opacity="0.35" stroke-width="1"/>
<polygon points="191.0,159.9 210.2,126.6 248.6,126.6 267.8,159.9 248.6,193.2 210.2,193.2" fill="none" stroke="#e6e6b0" stroke-opacity="0.35" stroke-width="1"/>
<polygon points="191.0,226.7 210.2,193.4 248.6,193.4 267.8,226.7 248.6,260.0 210.2,260.0" fill="none" stroke="#e6e6b0" stroke-opacity="0.35" stroke-width="1"/>
<polygon points="248.6,59.4 267.8,26.1 306.2,26.1 325.4,59.4 306.2,92.7 267.8,92.7" fill="none" stroke="#e6e6b0" stroke-opacity="0.35" stroke-width="1"/>
<polygon points="248.6,126.2 267.8,92.9 306.2,92.9 325.4,126.2 306.2,159.5 267.8,159.5" fill="none" stroke="#e6e6b0" stroke-opacity="0.35" stroke-width="1"/>
<polygon points="248.6,193.0 267.8,159.7 306.2,159.7 325.4,193.0 306.2,226.3 267.8,226.3" fill="none" stroke="#e6e6b0" stroke-opacity="0.35" stroke-width="1"/>
<polygon points="248.6,259.8 267.8,226.5 306.2,226.5 325.4,259.8 306.2,293.1 267.8,293.1" fill="none" stroke="#e6e6b0" stroke-opacity="0.35" stroke-width="1"/>
<polygon points="306.2,92.5 325.4,59.2 363.8,59.2 383.0,92.5 363.8,125.8 325.4,125.8" fill="none" stroke="#e6e6b0" stroke-opacity="0.35" stroke-width="1"/>
<polygon points="306.2,159.3 325.4,126.0 363.8,126.0 383.0,159.3 363.8,192.6 325.4,192.6" fill="none" stroke="#e6e6b0" stroke-opacity="0.35" stroke-width="1"/>
<polygon points="306.2,226.1 325.4,192.8 363.8,192.8 383.0,226.1 363.8,259.4 325.4,259.4" fill="none" stroke="#e6e6b0" stroke-opacity="0.35" stroke-width="1"/>
<polygon points="306.2,292.9 325.4,259.6 363.8,259.6 383.0,292.9 363.8,326.2 325.4,326.2" fill="none" stroke="#e6e6b0" stroke-opacity="0.35" stroke-width="1"/>
<polygon points="306.2,359.7 325.4,326.4 363.8,326.4 383.0,359.7 363.8,393.0 325.4,393.0" fill="none" stroke="#e6e6b0" stroke-opacity="0.35" stroke-width="1"/>
<polygon points="363.8,58.8 383.0,25.5 421.4,25.5 440.6,58.8 421.4,92.1 383.0,92.1" fill="none" stroke="#e6e6b0" stroke-opacity="0.35" stroke-width="1"/>
<polygon points="363.8,125.6 383.0,92.3 421.4,92.3 440.6,125.6 421.4,158.9 383.0,158.9" fill="none" stroke="#e6e6b0" stroke-opacity="0.35" stroke-width="1"/>
<polygon points="363.8,192.4 383.0,159.1 421.4,159.1 440.6,192.4 421.4,225.7 383.0,225.7" fill="none" stroke="#e6e6b0" stroke-opacity="0.35" stroke-width="1"/>
<polygon points="363.8,259.2 383.0,225.9 421.4,225.9 440.6,259.2 421.4,292.5 383.0,292.5" fill="none" stroke="#e6e6b0" stroke-opacity="0.35" stroke-width="1"/>
<polygon points="363.8,326.0 383.0,292.7 421.4,292.7 440.6,326.0 421.4,359.3 383.0,359.3" fill="none" stroke="#e6e6b0" stroke-opacity="0.35" stroke-width="1"/>
<polygon points="421.4,91.9 440.6,58.6 479.0,58.6 498.2,91.9 479.0,125.2 440.6,125.2" fill="none" stroke="#e6e6b0" stroke-opacity="0.35" stroke-width="1"/>
<polygon points="421.4,158.7 440.6,125.4 479.0,125.4 498.2,158.7 479.0,192.0 440.6,192.0" fill="none" stroke="#e6e6b0" stroke-opacity="0.35" stroke-width="1"/>
<polygon points="421.4,225.5 440.6,192.2 479.0,192.2 498.2,225.5 479.0,258.8 440.6,258.8" fill="none" stroke="#e6e6b0" stroke-opacity="0.35" stroke-width="1"/>
<polygon points="421.4,292.3 440.6,259.0 479.0,259.0 498.2,292.3 479.0,325.6 440.6,325.6" fill="none" stroke="#e6e6b0" stroke-opacity="0.35" stroke-width="1"/>
<polygon points="479.0,125.0 498.2,91.7 536.6,91.7 555.8,125.0 536.6,158.3 498.2,158.3" fill="none" stroke="#e6e6b0" stroke-opacity="0.35" stroke-width="1"/>
<polygon points="479.0,191.8 498.2,158.5 536.6,158.5 555.8,191.8 536.6,225.1 498.2,225.1" fill="none" stroke="#e6e6b0" stroke-opacity="0.35" stroke-width="1"/>
<polygon points="479.0,258.6 498.2,225.3 536.6,225.3 555.8,258.6 536.6,291.9 498.2,291.9" fill="none" stroke="#e6e6b0" stroke-opacity="0.35" stroke-width="1"/>
<polygon points="479.0,325.4 498.2,292.1 536.6,292.1 555.8,325.4 536.6,358.7 498.2,358.7" fill="none" stroke="#e6e6b0" stroke-opacity="0.35" stroke-width="1"/>
<polygon points="536.6,91.3 555.8,58.0 594.2,58.0 613.4,91.3 594.2,124.6 555.8,124.6" fill="none" stroke="#e6e6b0" stroke-opacity="0.35" stroke-width="1"/>
<polygon points="536.6,158.1 555.8,124.8 594.2,124.8 613.4,158.1 594.2,191.4 555.8,191.4" fill="none" stroke="#e6e6b0" stroke-opacity="0.35" stroke-width="1"/>
<polygon points="536.6,224.9 555.8,191.6 594.2,191.6 613.4,224.9 594.2,258.2 555.8,258.2" fill="none" stroke="#e6e6b0" stroke-opacity="0.35" stroke-width="1"/>
<polygon points="536.6,291.7 555.8,258.4 594.2,258.4 613.4,291.7 594.2,325.0 555.8,325.0" fill="none" stroke="#e6e6b0" stroke-opacity="0.35" stroke-width="1"/>
<polygon points="594.2,57.6 613.4,24.3 651.8,24.3 671.0,57.6 651.8,90.9 613.4,90.9" fill="none" stroke="#e6e6b0" stroke-opacity="0.35" stroke-width="1"/>
<polygon points="594.2,124.4 613.4,91.1 651.8,91.1 671.0,124.4 651.8,157.7 613.4,157.7" fill="none" stroke="#e6e6b0" stroke-opacity="0.35" stroke-width="1"/>
<polygon points="594.2,191.2 613.4,157.9 651.8,157.9 671.0,191.2 651.8,224.5 613.4,224.5" fill="none" stroke="#e6e6b0" stroke-opacity="0.35" stroke-width="1"/>
<polygon points="594.2,258.0 613.4,224.7 651.8,224.7 671.0,258.0 651.8,291.3 613.4,291.3" fill="none" stroke="#e6e6b0" stroke-opacity="0.35" stroke-width="1"/>
<polygon points="594.2,324.8 613.4,291.5 651.8,291.5 671.0,324.8 651.8,358.1 613.4,358.1" fill="none" stroke="#e6e6b0" stroke-opacity="0.35" stroke-width="1"/>
<polygon points="651.8,23.9 671.0,-9.4 709.4,-9.4 728.6,23.9 709.4,57.2 671.0,57.2" fill="none" stroke="#e6e6b0" stroke-opacity="0.35" stroke-width="1"/>
<polygon points="651.8,90.7 671.0,57.4 709.4,57.4 728.6,90.7 709.4,124.0 671.0,124.0" fill="none" stroke="#e6e6b0" stroke-opacity="0.35" stroke-width="1"/>
<polygon points="651.8,157.5 671.0,124.2 709.4,124.2 728.6,157.5 709.4,190.8 671.0,190.8" fill="none" stroke="#e6e6b0" stroke-opacity="0.35" stroke-width="1"/>
<polygon points="651.8,291.1 671.0,257.8 709.4,257.8 728.6,291.1 709.4,324.4 671.0,324.4" fill="none" stroke="#e6e6b0" stroke-opacity="0.35" stroke-width="1"/>
<polygon points="709.4,57.0 728.6,23.7 767.0,23.7 786.2,57.0 767.0,90.3 728.6,90.3" fill="none" stroke="#e6e6b0" stroke-opacity="0.35" stroke-width="1"/>
<polygon points="709.4,123.8 728.6,90.5 767.0,90.5 786.2,123.8 767.0,157.1 728.6,157.1" fill="none" stroke="#e6e6b0" stroke-opacity="0.35" stroke-width="1"/>
<g fill="#edeba6" stroke="#faf7b4" stroke-width="1.1">
<circle cx="171.8" cy="193.6" r="3.5"/>
<circle cx="229.4" cy="226.7" r="3.5"/>
<circle cx="287.0" cy="59.4" r="3.5"/>
<circle cx="287.0" cy="259.8" r="3.5"/>
<circle cx="402.2" cy="58.8" r="3.5"/>
<circle cx="383.0" cy="69.9" r="3.5"/>
<circle cx="402.2" cy="81.0" r="3.5"/>
<circle cx="402.2" cy="125.6" r="3.5"/>
<circle cx="402.2" cy="103.4" r="3.5"/>
<circle cx="402.2" cy="147.8" r="3.5"/>
<circle cx="383.0" cy="114.5" r="3.5"/>
<circle cx="383.0" cy="136.7" r="3.5"/>
<circle cx="421.4" cy="114.5" r="3.5"/>
<circle cx="421.4" cy="136.7" r="3.5"/>
<circle cx="402.2" cy="192.4" r="3.5"/>
<circle cx="402.2" cy="170.2" r="3.5"/>
<circle cx="402.2" cy="214.6" r="3.5"/>
<circle cx="383.0" cy="181.3" r="3.5"/>
<circle cx="383.0" cy="203.5" r="3.5"/>
<circle cx="421.4" cy="181.3" r="3.5"/>
<circle cx="421.4" cy="203.5" r="3.5"/>
<circle cx="402.2" cy="259.2" r="3.5"/>
<circle cx="402.2" cy="237.0" r="3.5"/>
<circle cx="402.2" cy="281.4" r="3.5"/>
<circle cx="383.0" cy="248.1" r="3.5"/>
<circle cx="383.0" cy="270.3" r="3.5"/>
<circle cx="421.4" cy="248.1" r="3.5"/>
<circle cx="421.4" cy="270.3" r="3.5"/>
<circle cx="402.2" cy="326.0" r="3.5"/>
<circle cx="402.2" cy="303.8" r="3.5"/>
<circle cx="402.2" cy="348.2" r="3.5"/>
<circle cx="383.0" cy="314.9" r="3.5"/>
<circle cx="383.0" cy="337.1" r="3.5"/>
<circle cx="421.4" cy="314.9" r="3.5"/>
<circle cx="459.8" cy="91.9" r="3.5"/>
<circle cx="440.6" cy="103.0" r="3.5"/>
<circle cx="479.0" cy="103.0" r="3.5"/>
<circle cx="459.8" cy="114.1" r="3.5"/>
<circle cx="459.8" cy="158.7" r="3.5"/>
<circle cx="459.8" cy="136.5" r="3.5"/>
<circle cx="459.8" cy="180.9" r="3.5"/>
<circle cx="440.6" cy="147.6" r="3.5"/>
<circle cx="440.6" cy="169.8" r="3.5"/>
<circle cx="479.0" cy="147.6" r="3.5"/>
<circle cx="479.0" cy="169.8" r="3.5"/>
<circle cx="459.8" cy="225.5" r="3.5"/>
<circle cx="459.8" cy="203.3" r="3.5"/>
<circle cx="459.8" cy="247.7" r="3.5"/>
<circle cx="440.6" cy="214.4" r="3.5"/>
<circle cx="440.6" cy="236.6" r="3.5"/>
<circle cx="479.0" cy="214.4" r="3.5"/>
<circle cx="479.0" cy="236.6" r="3.5"/>
<circle cx="459.8" cy="292.3" r="3.5"/>
<circle cx="459.8" cy="270.1" r="3.5"/>
<circle cx="459.8" cy="314.5" r="3.5"/>
<circle cx="440.6" cy="281.2" r="3.5"/>
<circle cx="440.6" cy="303.4" r="3.5"/>
<circle cx="479.0" cy="281.2" r="3.5"/>
<circle cx="479.0" cy="303.4" r="3.5"/>
<circle cx="517.4" cy="125.0" r="3.5"/>
<circle cx="517.4" cy="102.8" r="3.5"/>
<circle cx="517.4" cy="147.2" r="3.5"/>
<circle cx="498.2" cy="113.9" r="3.5"/>
<circle cx="498.2" cy="136.1" r="3.5"/>
<circle cx="517.4" cy="191.8" r="3.5"/>
<circle cx="517.4" cy="169.6" r="3.5"/>
<circle cx="517.4" cy="214.0" r="3.5"/>
<circle cx="498.2" cy="180.7" r="3.5"/>
<circle cx="498.2" cy="202.9" r="3.5"/>
<circle cx="536.6" cy="202.9" r="3.5"/>
<circle cx="517.4" cy="258.6" r="3.5"/>
<circle cx="517.4" cy="236.4" r="3.5"/>
<circle cx="517.4" cy="280.8" r="3.5"/>
<circle cx="498.2" cy="247.5" r="3.5"/>
<circle cx="498.2" cy="269.7" r="3.5"/>
<circle cx="536.6" cy="247.5" r="3.5"/>
<circle cx="536.6" cy="269.7" r="3.5"/>
<circle cx="517.4" cy="325.4" r="3.5"/>
<circle cx="517.4" cy="303.2" r="3.5"/>
<circle cx="498.2" cy="314.3" r="3.5"/>
<circle cx="536.6" cy="314.3" r="3.5"/>
<circle cx="575.0" cy="91.3" r="3.5"/>
<circle cx="594.2" cy="102.4" r="3.5"/>
<circle cx="575.0" cy="113.5" r="3.5"/>
<circle cx="575.0" cy="158.1" r="3.5"/>
<circle cx="575.0" cy="135.9" r="3.5"/>
<circle cx="575.0" cy="180.3" r="3.5"/>
<circle cx="555.8" cy="147.0" r="3.5"/>
<circle cx="555.8" cy="169.2" r="3.5"/>
<circle cx="594.2" cy="147.0" r="3.5"/>
<circle cx="594.2" cy="169.2" r="3.5"/>
<circle cx="575.0" cy="224.9" r="3.5"/>
<circle cx="575.0" cy="202.7" r="3.5"/>
<circle cx="575.0" cy="247.1" r="3.5"/>
<circle cx="555.8" cy="213.8" r="3.5"/>
<circle cx="555.8" cy="236.0" r="3.5"/>
<circle cx="594.2" cy="213.8" r="3.5"/>
<circle cx="594.2" cy="236.0" r="3.5"/>
<circle cx="575.0" cy="291.7" r="3.5"/>
<circle cx="575.0" cy="269.5" r="3.5"/>
<circle cx="575.0" cy="313.9" r="3.5"/>
<circle cx="555.8" cy="280.6" r="3.5"/>
<circle cx="555.8" cy="302.8" r="3.5"/>
<circle cx="594.2" cy="280.6" r="3.5"/>
<circle cx="594.2" cy="302.8" r="3.5"/>
<circle cx="632.6" cy="57.6" r="3.5"/>
<circle cx="632.6" cy="124.4" r="3.5"/>
<circle cx="632.6" cy="102.2" r="3.5"/>
<circle cx="632.6" cy="146.6" r="3.5"/>
<circle cx="613.4" cy="113.3" r="3.5"/>
<circle cx="613.4" cy="135.5" r="3.5"/>
<circle cx="651.8" cy="113.3" r="3.5"/>
<circle cx="651.8" cy="135.5" r="3.5"/>
<circle cx="632.6" cy="191.2" r="3.5"/>
<circle cx="632.6" cy="169.0" r="3.5"/>
<circle cx="632.6" cy="213.4" r="3.5"/>
<circle cx="613.4" cy="180.1" r="3.5"/>
<circle cx="613.4" cy="202.3" r="3.5"/>
<circle cx="651.8" cy="180.1" r="3.5"/>
<circle cx="651.8" cy="202.3" r="3.5"/>
<circle cx="632.6" cy="258.0" r="3.5"/>
<circle cx="632.6" cy="235.8" r="3.5"/>
<circle cx="632.6" cy="280.2" r="3.5"/>
<circle cx="613.4" cy="246.9" r="3.5"/>
<circle cx="613.4" cy="269.1" r="3.5"/>
<circle cx="651.8" cy="246.9" r="3.5"/>
<circle cx="651.8" cy="269.1" r="3.5"/>
<circle cx="632.6" cy="324.8" r="3.5"/>
<circle cx="632.6" cy="302.6" r="3.5"/>
<circle cx="613.4" cy="313.7" r="3.5"/>
<circle cx="651.8" cy="313.7" r="3.5"/>
<circle cx="690.2" cy="23.9" r="3.5"/>
<circle cx="690.2" cy="90.7" r="3.5"/>
<circle cx="690.2" cy="157.5" r="3.5"/>
<circle cx="690.2" cy="291.1" r="3.5"/>
<circle cx="747.8" cy="57.0" r="3.5"/>
<circle cx="747.8" cy="123.8" r="3.5"/>
<circle cx="200.6" cy="88.2" r="3.5"/>
<circle cx="200.6" cy="99.3" r="3.5"/>
<circle cx="210.2" cy="82.6" r="3.5"/>
<circle cx="210.2" cy="104.8" r="3.5"/>
<circle cx="210.2" cy="115.9" r="3.5"/>
<circle cx="219.8" cy="88.1" r="3.5"/>
<circle cx="219.8" cy="99.2" r="3.5"/>
<circle cx="219.8" cy="121.4" r="3.5"/>
<circle cx="229.4" cy="82.5" r="3.5"/>
<circle cx="229.4" cy="104.7" r="3.5"/>
<circle cx="229.4" cy="115.8" r="3.5"/>
<circle cx="239.0" cy="88.0" r="3.5"/>
<circle cx="239.0" cy="99.1" r="3.5"/>
<circle cx="239.0" cy="121.3" r="3.5"/>
<circle cx="248.6" cy="82.4" r="3.5"/>
<circle cx="248.6" cy="104.6" r="3.5"/>
<circle cx="248.6" cy="115.7" r="3.5"/>
<circle cx="258.2" cy="87.9" r="3.5"/>
<circle cx="258.2" cy="99.0" r="3.5"/>
<circle cx="258.2" cy="121.2" r="3.5"/>
<circle cx="258.2" cy="132.3" r="3.5"/>
<circle cx="258.2" cy="198.9" r="3.5"/>
<circle cx="267.8" cy="82.3" r="3.5"/>
<circle cx="267.8" cy="104.5" r="3.5"/>
<circle cx="267.8" cy="115.6" r="3.5"/>
<circle cx="267.8" cy="137.8" r="3.5"/>
<circle cx="267.8" cy="148.9" r="3.5"/>
<circle cx="267.8" cy="171.1" r="3.5"/>
<circle cx="267.8" cy="182.2" r="3.5"/>
<circle cx="267.8" cy="204.4" r="3.5"/>
<circle cx="277.4" cy="87.8" r="3.5"/>
<circle cx="277.4" cy="98.9" r="3.5"/>
<circle cx="277.4" cy="121.1" r="3.5"/>
<circle cx="277.4" cy="132.2" r="3.5"/>
<circle cx="277.4" cy="154.4" r="3.5"/>
<circle cx="277.4" cy="165.5" r="3.5"/>
<circle cx="277.4" cy="187.7" r="3.5"/>
<circle cx="277.4" cy="198.8" r="3.5"/>
<circle cx="287.0" cy="82.2" r="3.5"/>
<circle cx="287.0" cy="104.4" r="3.5"/>
<circle cx="287.0" cy="115.5" r="3.5"/>
<circle cx="287.0" cy="137.7" r="3.5"/>
<circle cx="287.0" cy="148.8" r="3.5"/>
<circle cx="287.0" cy="171.0" r="3.5"/>
<circle cx="287.0" cy="182.1" r="3.5"/>
<circle cx="287.0" cy="204.3" r="3.5"/>
<circle cx="296.6" cy="87.7" r="3.5"/>
<circle cx="296.6" cy="98.8" r="3.5"/>
<circle cx="296.6" cy="121.0" r="3.5"/>
<circle cx="296.6" cy="132.1" r="3.5"/>
<circle cx="296.6" cy="154.3" r="3.5"/>
<circle cx="296.6" cy="165.4" r="3.5"/>
<circle cx="296.6" cy="187.6" r="3.5"/>
<circle cx="296.6" cy="198.7" r="3.5"/>
<circle cx="296.6" cy="220.9" r="3.5"/>
<circle cx="306.2" cy="104.3" r="3.5"/>
<circle cx="306.2" cy="115.4" r="3.5"/>
<circle cx="306.2" cy="137.6" r="3.5"/>
<circle cx="306.2" cy="148.7" r="3.5"/>
<circle cx="306.2" cy="170.9" r="3.5"/>
<circle cx="306.2" cy="182.0" r="3.5"/>
<circle cx="306.2" cy="204.2" r="3.5"/>
<circle cx="306.2" cy="215.3" r="3.5"/>
<circle cx="306.2" cy="237.5" r="3.5"/>
<circle cx="306.2" cy="248.6" r="3.5"/>
<circle cx="315.8" cy="98.7" r="3.5"/>
<circle cx="315.8" cy="120.9" r="3.5"/>
<circle cx="315.8" cy="132.0" r="3.5"/>
<circle cx="315.8" cy="154.2" r="3.5"/>
<circle cx="315.8" cy="165.3" r="3.5"/>
<circle cx="315.8" cy="187.5" r="3.5"/>
<circle cx="315.8" cy="198.6" r="3.5"/>
<circle cx="315.8" cy="220.8" r="3.5"/>
<circle cx="315.8" cy="231.9" r="3.5"/>
<circle cx="315.8" cy="254.1" r="3.5"/>
<circle cx="315.8" cy="265.2" r="3.5"/>
<circle cx="315.8" cy="287.4" r="3.5"/>
<circle cx="325.4" cy="104.2" r="3.5"/>
<circle cx="325.4" cy="115.3" r="3.5"/>
<circle cx="325.4" cy="137.5" r="3.5"/>
<circle cx="325.4" cy="148.6" r="3.5"/>
<circle cx="325.4" cy="170.8" r="3.5"/>
<circle cx="325.4" cy="181.9" r="3.5"/>
<circle cx="325.4" cy="204.1" r="3.5"/>
<circle cx="325.4" cy="215.2" r="3.5"/>
<circle cx="325.4" cy="237.4" r="3.5"/>
<circle cx="325.4" cy="248.5" r="3.5"/>
<circle cx="325.4" cy="270.7" r="3.5"/>
<circle cx="325.4" cy="281.8" r="3.5"/>
<circle cx="325.4" cy="304.0" r="3.5"/>
<circle cx="325.4" cy="315.1" r="3.5"/>
<circle cx="335.0" cy="98.6" r="3.5"/>
<circle cx="335.0" cy="120.8" r="3.5"/>
<circle cx="335.0" cy="131.9" r="3.5"/>
<circle cx="335.0" cy="154.1" r="3.5"/>
<circle cx="335.0" cy="165.2" r="3.5"/>
<circle cx="335.0" cy="187.4" r="3.5"/>
<circle cx="335.0" cy="198.5" r="3.5"/>
<circle cx="335.0" cy="220.7" r="3.5"/>
<circle cx="335.0" cy="231.8" r="3.5"/>
<circle cx="335.0" cy="254.0" r="3.5"/>
<circle cx="335.0" cy="265.1" r="3.5"/>
<circle cx="335.0" cy="287.3" r="3.5"/>
<circle cx="335.0" cy="298.4" r="3.5"/>
<circle cx="335.0" cy="320.6" r="3.5"/>
<circle cx="335.0" cy="331.7" r="3.5"/>
<circle cx="344.6" cy="104.1" r="3.5"/>
<circle cx="344.6" cy="115.2" r="3.5"/>
<circle cx="344.6" cy="137.4" r="3.5"/>
<circle cx="344.6" cy="148.5" r="3.5"/>
<circle cx="344.6" cy="170.7" r="3.5"/>
<circle cx="344.6" cy="181.8" r="3.5"/>
<circle cx="344.6" cy="204.0" r="3.5"/>
<circle cx="344.6" cy="215.1" r="3.5"/>
<circle cx="344.6" cy="237.3" r="3.5"/>
<circle cx="344.6" cy="248.4" r="3.5"/>
<circle cx="344.6" cy="270.6" r="3.5"/>
<circle cx="344.6" cy="281.7" r="3.5"/>
<circle cx="344.6" cy="303.9" r="3.5"/>
<circle cx="344.6" cy="315.0" r="3.5"/>
<circle cx="344.6" cy="337.2" r="3.5"/>
<circle cx="354.2" cy="98.5" r="3.5"/>
<circle cx="354.2" cy="120.7" r="3.5"/>
<circle cx="354.2" cy="131.8" r="3.5"/>
<circle cx="354.2" cy="154.0" r="3.5"/>
<circle cx="354.2" cy="165.1" r="3.5"/>
<circle cx="354.2" cy="187.3" r="3.5"/>
<circle cx="354.2" cy="198.4" r="3.5"/>
<circle cx="354.2" cy="220.6" r="3.5"/>
<circle cx="354.2" cy="231.7" r="3.5"/>
<circle cx="354.2" cy="253.9" r="3.5"/>
<circle cx="354.2" cy="265.0" r="3.5"/>
<circle cx="354.2" cy="287.2" r="3.5"/>
<circle cx="354.2" cy="298.3" r="3.5"/>
<circle cx="354.2" cy="320.5" r="3.5"/>
<circle cx="354.2" cy="331.6" r="3.5"/>
<circle cx="363.8" cy="104.0" r="3.5"/>
<circle cx="363.8" cy="115.1" r="3.5"/>
<circle cx="363.8" cy="137.3" r="3.5"/>
<circle cx="363.8" cy="148.4" r="3.5"/>
<circle cx="363.8" cy="170.6" r="3.5"/>
<circle cx="363.8" cy="181.7" r="3.5"/>
<circle cx="363.8" cy="203.9" r="3.5"/>
<circle cx="363.8" cy="215.0" r="3.5"/>
<circle cx="363.8" cy="237.2" r="3.5"/>
<circle cx="363.8" cy="248.3" r="3.5"/>
<circle cx="363.8" cy="270.5" r="3.5"/>
<circle cx="363.8" cy="281.6" r="3.5"/>
<circle cx="363.8" cy="303.8" r="3.5"/>
<circle cx="363.8" cy="314.9" r="3.5"/>
<circle cx="363.8" cy="337.1" r="3.5"/>
<circle cx="373.4" cy="87.3" r="3.5"/>
<circle cx="373.4" cy="98.4" r="3.5"/>
<circle cx="373.4" cy="120.6" r="3.5"/>
<circle cx="373.4" cy="131.7" r="3.5"/>
<circle cx="373.4" cy="153.9" r="3.5"/>
<circle cx="373.4" cy="165.0" r="3.5"/>
<circle cx="373.4" cy="187.2" r="3.5"/>
<circle cx="373.4" cy="198.3" r="3.5"/>
<circle cx="373.4" cy="220.5" r="3.5"/>
<circle cx="373.4" cy="231.6" r="3.5"/>
<circle cx="373.4" cy="253.8" r="3.5"/>
<circle cx="373.4" cy="264.9" r="3.5"/>
<circle cx="373.4" cy="287.1" r="3.5"/>
<circle cx="373.4" cy="298.2" r="3.5"/>
<circle cx="373.4" cy="320.4" r="3.5"/>
<circle cx="373.4" cy="331.5" r="3.5"/>
<circle cx="171.8" cy="126.8" r="3.5"/>
<circle cx="229.4" cy="93.1" r="3.5"/>
<circle cx="229.4" cy="159.9" r="3.5"/>
<circle cx="287.0" cy="126.2" r="3.5"/>
<circle cx="287.0" cy="193.0" r="3.5"/>
<circle cx="344.6" cy="92.5" r="3.5"/>
<circle cx="344.6" cy="159.3" r="3.5"/>
<circle cx="344.6" cy="226.1" r="3.5"/>
<circle cx="344.6" cy="292.9" r="3.5"/>
</g>
<g fill="#f6f3ae" fill-opacity="0.62" stroke="#fdfac4" stroke-opacity="0.7" stroke-width="0.9">
<circle cx="172.1" cy="121.9" r="3.6"/>
<circle cx="172.1" cy="133.1" r="3.6"/>
<circle cx="172.1" cy="138.6" r="3.6"/>
<circle cx="176.9" cy="124.7" r="3.6"/>
<circle cx="176.9" cy="130.3" r="3.6"/>
<circle cx="176.9" cy="141.4" r="3.6"/>
<circle cx="176.9" cy="146.9" r="3.6"/>
<circle cx="176.9" cy="158.0" r="3.6"/>
<circle cx="181.7" cy="121.9" r="3.6"/>
<circle cx="181.7" cy="133.1" r="3.6"/>
<circle cx="181.7" cy="138.6" r="3.6"/>
<circle cx="181.7" cy="149.7" r="3.6"/>
<circle cx="181.7" cy="155.2" r="3.6"/>
<circle cx="181.7" cy="166.3" r="3.6"/>
<circle cx="181.7" cy="171.9" r="3.6"/>
<circle cx="186.5" cy="124.7" r="3.6"/>
<circle cx="186.5" cy="130.3" r="3.6"/>
<circle cx="186.5" cy="141.4" r="3.6"/>
<circle cx="186.5" cy="146.9" r="3.6"/>
<circle cx="186.5" cy="158.0" r="3.6"/>
<circle cx="186.5" cy="163.6" r="3.6"/>
<circle cx="186.5" cy="174.7" r="3.6"/>
<circle cx="186.5" cy="180.2" r="3.6"/>
<circle cx="186.5" cy="191.3" r="3.6"/>
<circle cx="186.5" cy="196.9" r="3.6"/>
<circle cx="191.3" cy="121.9" r="3.6"/>
<circle cx="191.3" cy="133.1" r="3.6"/>
<circle cx="191.3" cy="138.6" r="3.6"/>
<circle cx="191.3" cy="149.7" r="3.6"/>
<circle cx="191.3" cy="155.2" r="3.6"/>
<circle cx="191.3" cy="166.3" r="3.6"/>
<circle cx="191.3" cy="171.9" r="3.6"/>
<circle cx="191.3" cy="183.0" r="3.6"/>
<circle cx="191.3" cy="188.6" r="3.6"/>
<circle cx="191.3" cy="199.6" r="3.6"/>
<circle cx="196.1" cy="124.7" r="3.6"/>
<circle cx="196.1" cy="130.3" r="3.6"/>
<circle cx="196.1" cy="141.4" r="3.6"/>
<circle cx="196.1" cy="146.9" r="3.6"/>
<circle cx="196.1" cy="158.0" r="3.6"/>
<circle cx="196.1" cy="163.6" r="3.6"/>
<circle cx="196.1" cy="174.7" r="3.6"/>
<circle cx="196.1" cy="180.2" r="3.6"/>
<circle cx="196.1" cy="191.3" r="3.6"/>
<circle cx="196.1" cy="196.9" r="3.6"/>
<circle cx="200.9" cy="121.9" r="3.6"/>
<circle cx="200.9" cy="133.1" r="3.6"/>
<circle cx="200.9" cy="138.6" r="3.6"/>
<circle cx="200.9" cy="149.7" r="3.6"/>
<circle cx="200.9" cy="155.2" r="3.6"/>
<circle cx="200.9" cy="166.3" r="3.6"/>
<circle cx="200.9" cy="171.9" r="3.6"/>
<circle cx="200.9" cy="183.0" r="3.6"/>
<circle cx="200.9" cy="188.6" r="3.6"/>
<circle cx="200.9" cy="199.6" r="3.6"/>
<circle cx="205.7" cy="124.7" r="3.6"/>
<circle cx="205.7" cy="130.3" r="3.6"/>
<circle cx="205.7" cy="141.4" r="3.6"/>
<circle cx="205.7" cy="146.9" r="3.6"/>
<circle cx="205.7" cy="158.0" r="3.6"/>
<circle cx="205.7" cy="163.6" r="3.6"/>
<circle cx="205.7" cy="174.7" r="3.6"/>
<circle cx="205.7" cy="180.2" r="3.6"/>
<circle cx="205.7" cy="191.3" r="3.6"/>
<circle cx="205.7" cy="196.9" r="3.6"/>
<circle cx="210.5" cy="133.1" r="3.6"/>
<circle cx="210.5" cy="138.6" r="3.6"/>
<circle cx="210.5" cy="149.7" r="3.6"/>
<circle cx="210.5" cy="155.2" r="3.6"/>
<circle cx="210.5" cy="166.3" r="3.6"/>
<circle cx="210.5" cy="171.9" r="3.6"/>
<circle cx="210.5" cy="183.0" r="3.6"/>
<circle cx="210.5" cy="188.6" r="3.6"/>
<circle cx="210.5" cy="199.6" r="3.6"/>
<circle cx="215.3" cy="130.3" r="3.6"/>
<circle cx="215.3" cy="141.4" r="3.6"/>
<circle cx="215.3" cy="146.9" r="3.6"/>
<circle cx="215.3" cy="158.0" r="3.6"/>
<circle cx="215.3" cy="163.6" r="3.6"/>
<circle cx="215.3" cy="174.7" r="3.6"/>
<circle cx="215.3" cy="180.2" r="3.6"/>
<circle cx="215.3" cy="191.3" r="3.6"/>
<circle cx="215.3" cy="196.9" r="3.6"/>
<circle cx="220.1" cy="133.1" r="3.6"/>
<circle cx="220.1" cy="138.6" r="3.6"/>
<circle cx="220.1" cy="149.7" r="3.6"/>
<circle cx="220.1" cy="155.2" r="3.6"/>
<circle cx="220.1" cy="166.3" r="3.6"/>
<circle cx="220.1" cy="171.9" r="3.6"/>
<circle cx="220.1" cy="183.0" r="3.6"/>
<circle cx="220.1" cy="188.6" r="3.6"/>
<circle cx="220.1" cy="199.6" r="3.6"/>
<circle cx="224.9" cy="130.3" r="3.6"/>
<circle cx="224.9" cy="141.4" r="3.6"/>
<circle cx="224.9" cy="146.9" r="3.6"/>
<circle cx="224.9" cy="158.0" r="3.6"/>
<circle cx="224.9" cy="163.6" r="3.6"/>
<circle cx="224.9" cy="174.7" r="3.6"/>
<circle cx="224.9" cy="180.2" r="3.6"/>
<circle cx="224.9" cy="191.3" r="3.6"/>
<circle cx="224.9" cy="196.9" r="3.6"/>
<circle cx="229.7" cy="133.1" r="3.6"/>
<circle cx="229.7" cy="138.6" r="3.6"/>
<circle cx="229.7" cy="149.7" r="3.6"/>
<circle cx="229.7" cy="155.2" r="3.6"/>
<circle cx="229.7" cy="166.3" r="3.6"/>
<circle cx="229.7" cy="171.9" r="3.6"/>
<circle cx="229.7" cy="183.0" r="3.6"/>
<circle cx="229.7" cy="188.6" r="3.6"/>
<circle cx="229.7" cy="199.6" r="3.6"/>
<circle cx="234.5" cy="130.3" r="3.6"/>
<circle cx="234.5" cy="141.4" r="3.6"/>
<circle cx="234.5" cy="146.9" r="3.6"/>
<circle cx="234.5" cy="158.0" r="3.6"/>
<circle cx="234.5" cy="163.6" r="3.6"/>
<circle cx="234.5" cy="174.7" r="3.6"/>
<circle cx="234.5" cy="180.2" r="3.6"/>
<circle cx="234.5" cy="191.3" r="3.6"/>
<circle cx="234.5" cy="196.9" r="3.6"/>
<circle cx="239.3" cy="133.1" r="3.6"/>
<circle cx="239.3" cy="138.6" r="3.6"/>
<circle cx="239.3" cy="149.7" r="3.6"/>
<circle cx="239.3" cy="155.2" r="3.6"/>
<circle cx="239.3" cy="166.3" r="3.6"/>
<circle cx="239.3" cy="171.9" r="3.6"/>
<circle cx="239.3" cy="183.0" r="3.6"/>
<circle cx="239.3" cy="188.6" r="3.6"/>
<circle cx="239.3" cy="199.6" r="3.6"/>
<circle cx="244.1" cy="130.3" r="3.6"/>
<circle cx="244.1" cy="141.4" r="3.6"/>
<circle cx="244.1" cy="146.9" r="3.6"/>
<circle cx="244.1" cy="158.0" r="3.6"/>
<circle cx="244.1" cy="163.6" r="3.6"/>
<circle cx="244.1" cy="174.7" r="3.6"/>
<circle cx="244.1" cy="180.2" r="3.6"/>
<circle cx="244.1" cy="191.3" r="3.6"/>
<circle cx="244.1" cy="196.9" r="3.6"/>
<circle cx="248.9" cy="133.1" r="3.6"/>
<circle cx="248.9" cy="138.6" r="3.6"/>
<circle cx="248.9" cy="149.7" r="3.6"/>
<circle cx="248.9" cy="155.2" r="3.6"/>
<circle cx="248.9" cy="166.3" r="3.6"/>
<circle cx="248.9" cy="171.9" r="3.6"/>
<circle cx="248.9" cy="183.0" r="3.6"/>
<circle cx="248.9" cy="188.6" r="3.6"/>
<circle cx="248.9" cy="199.6" r="3.6"/>
<circle cx="253.7" cy="130.3" r="3.6"/>
<circle cx="253.7" cy="141.4" r="3.6"/>
<circle cx="253.7" cy="146.9" r="3.6"/>
<circle cx="253.7" cy="158.0" r="3.6"/>
<circle cx="253.7" cy="163.6" r="3.6"/>
<circle cx="253.7" cy="174.7" r="3.6"/>
<circle cx="253.7" cy="180.2" r="3.6"/>
<circle cx="253.7" cy="191.3" r="3.6"/>
<circle cx="253.7" cy="196.9" r="3.6"/>
<circle cx="258.5" cy="149.7" r="3.6"/>
<circle cx="258.5" cy="155.2" r="3.6"/>
<circle cx="258.5" cy="166.3" r="3.6"/>
<circle cx="258.5" cy="171.9" r="3.6"/>
<circle cx="258.5" cy="183.0" r="3.6"/>
<circle cx="258.5" cy="188.6" r="3.6"/>
<circle cx="263.3" cy="158.0" r="3.6"/>
<circle cx="263.3" cy="163.6" r="3.6"/>
</g>
<g fill="#fdfbb6">
<circle cx="179.4" cy="161.2" r="3.5"/>
<circle cx="180.6" cy="163.3" r="3.5"/>
<circle cx="180.6" cy="167.5" r="3.5"/>
<circle cx="180.6" cy="171.7" r="3.5"/>
<circle cx="181.8" cy="161.2" r="3.5"/>
<circle cx="183.0" cy="163.3" r="3.5"/>
<circle cx="181.8" cy="165.4" r="3.5"/>
<circle cx="183.0" cy="167.5" r="3.5"/>
<circle cx="181.8" cy="169.6" r="3.5"/>
<circle cx="183.0" cy="171.7" r="3.5"/>
<circle cx="181.8" cy="173.8" r="3.5"/>
<circle cx="183.0" cy="175.9" r="3.5"/>
<circle cx="181.8" cy="178.0" r="3.5"/>
<circle cx="183.0" cy="180.1" r="3.5"/>
<circle cx="181.8" cy="182.2" r="3.5"/>
<circle cx="183.0" cy="184.3" r="3.5"/>
<circle cx="184.2" cy="161.2" r="3.5"/>
<circle cx="185.4" cy="163.3" r="3.5"/>
<circle cx="184.2" cy="165.4" r="3.5"/>
<circle cx="185.4" cy="167.5" r="3.5"/>
<circle cx="184.2" cy="169.6" r="3.5"/>
<circle cx="185.4" cy="171.7" r="3.5"/>
<circle cx="184.2" cy="173.8" r="3.5"/>
<circle cx="185.4" cy="175.9" r="3.5"/>
<circle cx="184.2" cy="178.0" r="3.5"/>
<circle cx="185.4" cy="180.1" r="3.5"/>
<circle cx="184.2" cy="182.2" r="3.5"/>
<circle cx="185.4" cy="184.3" r="3.5"/>
<circle cx="184.2" cy="186.4" r="3.5"/>
<circle cx="185.4" cy="188.5" r="3.5"/>
<circle cx="185.4" cy="192.7" r="3.5"/>
<circle cx="186.6" cy="161.2" r="3.5"/>
<circle cx="187.8" cy="163.3" r="3.5"/>
<circle cx="186.6" cy="165.4" r="3.5"/>
<circle cx="187.8" cy="167.5" r="3.5"/>
<circle cx="186.6" cy="169.6" r="3.5"/>
<circle cx="187.8" cy="171.7" r="3.5"/>
<circle cx="186.6" cy="173.8" r="3.5"/>
<circle cx="187.8" cy="175.9" r="3.5"/>
<circle cx="186.6" cy="178.0" r="3.5"/>
<circle cx="187.8" cy="180.1" r="3.5"/>
<circle cx="186.6" cy="182.2" r="3.5"/>
<circle cx="187.8" cy="184.3" r="3.5"/>
<circle cx="186.6" cy="186.4" r="3.5"/>
<circle cx="187.8" cy="188.5" r="3.5"/>
<circle cx="186.6" cy="190.6" r="3.5"/>
<circle cx="187.8" cy="192.7" r="3.5"/>
<circle cx="186.6" cy="194.8" r="3.5"/>
<circle cx="187.8" cy="196.9" r="3.5"/>
<circle cx="190.2" cy="163.3" r="3.5"/>
<circle cx="189.0" cy="165.4" r="3.5"/>
<circle cx="190.2" cy="167.5" r="3.5"/>
<circle cx="189.0" cy="169.6" r="3.5"/>
<circle cx="190.2" cy="171.7" r="3.5"/>
<circle cx="189.0" cy="173.8" r="3.5"/>
<circle cx="190.2" cy="175.9" r="3.5"/>
<circle cx="189.0" cy="178.0" r="3.5"/>
<circle cx="190.2" cy="180.1" r="3.5"/>
<circle cx="189.0" cy="182.2" r="3.5"/>
<circle cx="190.2" cy="184.3" r="3.5"/>
<circle cx="189.0" cy="186.4" r="3.5"/>
<circle cx="190.2" cy="188.5" r="3.5"/>
<circle cx="189.0" cy="190.6" r="3.5"/>
<circle cx="190.2" cy="192.7" r="3.5"/>
<circle cx="189.0" cy="194.8" r="3.5"/>
<circle cx="190.2" cy="196.9" r="3.5"/>
<circle cx="189.0" cy="199.0" r="3.5"/>
<circle cx="190.2" cy="201.1" r="3.5"/>
<circle cx="189.0" cy="203.2" r="3.5"/>
<circle cx="192.6" cy="163.3" r="3.5"/>
<circle cx="191.4" cy="165.4" r="3.5"/>
<circle cx="192.6" cy="167.5" r="3.5"/>
<circle cx="191.4" cy="169.6" r="3.5"/>
<circle cx="192.6" cy="171.7" r="3.5"/>
<circle cx="191.4" cy="173.8" r="3.5"/>
<circle cx="192.6" cy="175.9" r="3.5"/>
<circle cx="191.4" cy="178.0" r="3.5"/>
<circle cx="192.6" cy="180.1" r="3.5"/>
<circle cx="191.4" cy="182.2" r="3.5"/>
<circle cx="192.6" cy="184.3" r="3.5"/>
<circle cx="191.4" cy="186.4" r="3.5"/>
<circle cx="192.6" cy="188.5" r="3.5"/>
<circle cx="191.4" cy="190.6" r="3.5"/>
<circle cx="192.6" cy="192.7" r="3.5"/>
<circle cx="191.4" cy="194.8" r="3.5"/>
<circle cx="192.6" cy="196.9" r="3.5"/>
<circle cx="191.4" cy="199.0" r="3.5"/>
<circle cx="192.6" cy="201.1" r="3.5"/>
<circle cx="191.4" cy="203.2" r="3.5"/>
<circle cx="195.0" cy="163.3" r="3.5"/>
<circle cx="193.8" cy="165.4" r="3.5"/>
<circle cx="195.0" cy="167.5" r="3.5"/>
<circle cx="193.8" cy="169.6" r="3.5"/>
<circle cx="195.0" cy="171.7" r="3.5"/>
<circle cx="193.8" cy="173.8" r="3.5"/>
<circle cx="195.0" cy="175.9" r="3.5"/>
<circle cx="193.8" cy="178.0" r="3.5"/>
<circle cx="195.0" cy="180.1" r="3.5"/>
<circle cx="193.8" cy="182.2" r="3.5"/>
<circle cx="195.0" cy="184.3" r="3.5"/>
<circle cx="193.8" cy="186.4" r="3.5"/>
<circle cx="195.0" cy="188.5" r="3.5"/>
<circle cx="193.8" cy="190.6" r="3.5"/>
<circle cx="195.0" cy="192.7" r="3.5"/>
<circle cx="193.8" cy="194.8" r="3.5"/>
<circle cx="195.0" cy="196.9" r="3.5"/>
<circle cx="193.8" cy="199.0" r="3.5"/>
<circle cx="195.0" cy="201.1" r="3.5"/>
<circle cx="196.2" cy="165.4" r="3.5"/>
<circle cx="197.4" cy="167.5" r="3.5"/>
<circle cx="196.2" cy="169.6" r="3.5"/>
<circle cx="197.4" cy="171.7" r="3.5"/>
<circle cx="196.2" cy="173.8" r="3.5"/>
<circle cx="197.4" cy="175.9" r="3.5"/>
<circle cx="196.2" cy="178.0" r="3.5"/>
<circle cx="197.4" cy="180.1" r="3.5"/>
<circle cx="196.2" cy="182.2" r="3.5"/>
<circle cx="197.4" cy="184.3" r="3.5"/>
<circle cx="196.2" cy="186.4" r="3.5"/>
<circle cx="197.4" cy="188.5" r="3.5"/>
<circle cx="196.2" cy="190.6" r="3.5"/>
<circle cx="197.4" cy="192.7" r="3.5"/>
<circle cx="196.2" cy="194.8" r="3.5"/>
<circle cx="197.4" cy="196.9" r="3.5"/>
<circle cx="196.2" cy="199.0" r="3.5"/>
<circle cx="197.4" cy="201.1" r="3.5"/>
<circle cx="198.6" cy="169.6" r="3.5"/>
<circle cx="199.8" cy="171.7" r="3.5"/>
<circle cx="198.6" cy="173.8" r="3.5"/>
<circle cx="199.8" cy="175.9" r="3.5"/>
<circle cx="198.6" cy="178.0" r="3.5"/>
<circle cx="199.8" cy="180.1" r="3.5"/>
<circle cx="198.6" cy="182.2" r="3.5"/>
<circle cx="199.8" cy="184.3" r="3.5"/>
<circle cx="198.6" cy="186.4" r="3.5"/>
<circle cx="199.8" cy="188.5" r="3.5"/>
<circle cx="198.6" cy="190.6" r="3.5"/>
<circle cx="199.8" cy="192.7" r="3.5"/>
<circle cx="198.6" cy="194.8" r="3.5"/>
<circle cx="199.8" cy="196.9" r="3.5"/>
<circle cx="198.6" cy="199.0" r="3.5"/>
<circle cx="199.8" cy="201.1" r="3.5"/>
<circle cx="201.0" cy="173.8" r="3.5"/>
<circle cx="202.2" cy="175.9" r="3.5"/>
<circle cx="201.0" cy="178.0" r="3.5"/>
<circle cx="202.2" cy="180.1" r="3.5"/>
<circle cx="201.0" cy="182.2" r="3.5"/>
<circle cx="202.2" cy="184.3" r="3.5"/>
<circle cx="201.0" cy="186.4" r="3.5"/>
<circle cx="202.2" cy="188.5" r="3.5"/>
<circle cx="201.0" cy="190.6" r="3.5"/>
<circle cx="202.2" cy="192.7" r="3.5"/>
<circle cx="201.0" cy="194.8" r="3.5"/>
<circle cx="202.2" cy="196.9" r="3.5"/>
<circle cx="201.0" cy="199.0" r="3.5"/>
<circle cx="202.2" cy="201.1" r="3.5"/>
<circle cx="203.4" cy="173.8" r="3.5"/>
<circle cx="204.6" cy="175.9" r="3.5"/>
<circle cx="203.4" cy="178.0" r="3.5"/>
<circle cx="204.6" cy="180.1" r="3.5"/>
<circle cx="203.4" cy="182.2" r="3.5"/>
<circle cx="204.6" cy="184.3" r="3.5"/>
<circle cx="203.4" cy="186.4" r="3.5"/>
<circle cx="204.6" cy="188.5" r="3.5"/>
<circle cx="203.4" cy="190.6" r="3.5"/>
<circle cx="204.6" cy="192.7" r="3.5"/>
<circle cx="203.4" cy="194.8" r="3.5"/>
<circle cx="204.6" cy="196.9" r="3.5"/>
<circle cx="203.4" cy="199.0" r="3.5"/>
<circle cx="204.6" cy="201.1" r="3.5"/>
<circle cx="205.8" cy="178.0" r="3.5"/>
<circle cx="207.0" cy="180.1" r="3.5"/>
<circle cx="205.8" cy="182.2" r="3.5"/>
<circle cx="207.0" cy="184.3" r="3.5"/>
<circle cx="205.8" cy="186.4" r="3.5"/>
<circle cx="207.0" cy="188.5" r="3.5"/>
<circle cx="205.8" cy="190.6" r="3.5"/>
<circle cx="207.0" cy="192.7" r="3.5"/>
<circle cx="205.8" cy="194.8" r="3.5"/>
<circle cx="207.0" cy="196.9" r="3.5"/>
<circle cx="205.8" cy="199.0" r="3.5"/>
<circle cx="207.0" cy="201.1" r="3.5"/>
<circle cx="208.2" cy="182.2" r="3.5"/>
<circle cx="209.4" cy="184.3" r="3.5"/>
<circle cx="208.2" cy="186.4" r="3.5"/>
<circle cx="209.4" cy="188.5" r="3.5"/>
<circle cx="208.2" cy="190.6" r="3.5"/>
<circle cx="209.4" cy="192.7" r="3.5"/>
<circle cx="208.2" cy="194.8" r="3.5"/>
<circle cx="209.4" cy="196.9" r="3.5"/>
<circle cx="208.2" cy="199.0" r="3.5"/>
<circle cx="210.6" cy="186.4" r="3.5"/>
<circle cx="210.6" cy="190.6" r="3.5"/>
</g>
</svg></div>
<div class="a" style="left:392px;top:47px;width:1163px;height:1px;background:#a8a8a8"></div>
<div class="a" style="left:385px;top:391px;width:1px;height:255px;background:#c2c2c2"></div><svg class="a" style="left:388px;top:401px" width="3" height="18"><rect x="1" y="0" width="1" height="1" fill="#a0a0a0"/><rect x="1" y="3" width="1" height="1" fill="#a0a0a0"/><rect x="1" y="6" width="1" height="1" fill="#a0a0a0"/><rect x="1" y="9" width="1" height="1" fill="#a0a0a0"/><rect x="1" y="12" width="1" height="1" fill="#a0a0a0"/><rect x="1" y="15" width="1" height="1" fill="#a0a0a0"/></svg><div class="t" style="left:399px;top:399px;font-size:15px">Example project - receptor_points &#8212; Features Total: 49, Filtered: 49, Selected: 0</div><svg class="a" style="left:1527px;top:402px" width="26" height="13" viewBox="0 0 26 13"><rect x="0.5" y="0.5" width="11" height="11" rx="2" fill="none" stroke="#7a7a7a"/><rect x="2.5" y="4.5" width="5" height="5" fill="none" stroke="#555"/><rect x="4.5" y="2.5" width="5" height="5" fill="none" stroke="#555"/><rect x="14.5" y="0.5" width="11" height="11" rx="2" fill="none" stroke="#7a7a7a"/><path d="M17 3 L23 9 M23 3 L17 9" stroke="#555" stroke-width="2"/></svg><svg class="a" style="left:390px;top:416px" width="840" height="40" viewBox="390 416 840 40"><path d="M417.5 425 L420.5 427.5 L409 444 L404 447.5 L404.8 441.5Z" fill="#e8d83a" stroke="#8a7a20" stroke-width="0.8"/><path d="M404.8 441.5 L409 444 L404 447.5Z" fill="#666"/><path d="M416.5 424.2 L420.5 427.2 L421.3 426 L417.5 423Z" fill="#ddd" stroke="#999" stroke-width="0.5"/><rect x="435" y="426.5" width="20" height="5" fill="#d9d8cc" stroke="#c9c8b8" stroke-width="0.6"/><rect x="435" y="432.5" width="20" height="5" fill="#d9d8cc" stroke="#c9c8b8" stroke-width="0.6"/><rect x="435" y="438.5" width="20" height="5" fill="#d9d8cc" stroke="#c9c8b8" stroke-width="0.6"/><path d="M452 425 L455.5 427.5 L444 445.5 L441.5 447 L441.5 444Z" fill="#e4e4e0" stroke="#bdbdb5" stroke-width="0.7"/><rect x="467.5" y="425.5" width="20" height="20" rx="2" fill="#dcdcd4" stroke="#cfcfc5" stroke-width="0.8"/><rect x="471" y="427" width="13" height="7" fill="#ececea"/><path d="M485 432 L488 434 L481 446 L479 447 L479 444.5Z" fill="#d8d5cc"/><path d="M502 436 Q502.5 427 511 426.5 Q516 426.5 518 429.5 L520.5 427 V434 H513.5 L516 431.5 Q514.5 429.8 511 430 Q506 430.5 505.8 436Z" fill="#3d84d0"/><path d="M520.5 436 Q520 445 511.5 445.5 Q506.5 445.5 504.5 442.5 L502 445 V438 H509 L506.5 440.5 Q508 442.2 511.5 442 Q516.5 441.5 516.7 436Z" fill="#3d84d0"/><rect x="532.0" y="427" width="1" height="19" fill="#d2d2d2"/><rect x="533.0" y="427" width="1" height="19" fill="#fafafa"/><rect x="704.0" y="427" width="1" height="19" fill="#d2d2d2"/><rect x="705.0" y="427" width="1" height="19" fill="#fafafa"/><rect x="974.5" y="427" width="1" height="19" fill="#d2d2d2"/><rect x="975.5" y="427" width="1" height="19" fill="#fafafa"/><rect x="1114.0" y="427" width="1" height="19" fill="#d2d2d2"/><rect x="1115.0" y="427" width="1" height="19" fill="#fafafa"/><rect x="1154.0" y="427" width="1" height="19" fill="#d2d2d2"/><rect x="1155.0" y="427" width="1" height="19" fill="#fafafa"/><rect x="541" y="426.5" width="20" height="19" fill="#e6e6e4" stroke="#d0d0cc" stroke-width="0.8"/><rect x="541" y="431" width="21" height="4" fill="#d8d8d2"/><rect x="553" y="438" width="9.5" height="9.5" rx="1.5" fill="#cfcdc2"/><circle cx="557.7" cy="442.7" r="2.2" fill="none" stroke="#eee" stroke-width="1"/><rect x="574" y="426" width="17.5" height="2.5" fill="#d4cece"/><path d="M575.5 430 H590 L589 446.5 H576.5Z" fill="#dcd6d4" stroke="#cfc7c5" stroke-width="0.7"/><rect x="579.0" y="432" width="1.5" height="12" fill="#c7bcbc"/><rect x="583.0" y="432" width="1.5" height="12" fill="#c7bcbc"/><rect x="587.0" y="432" width="1.5" height="12" fill="#c7bcbc"/><path d="M606 431 L622 437.5 M606 439 L622 432.5" stroke="#cfcfcf" stroke-width="1.5"/><circle cx="624" cy="431.5" r="3" fill="none" stroke="#d2caca" stroke-width="1.5"/><circle cx="624" cy="439.5" r="3" fill="none" stroke="#d2caca" stroke-width="1.5"/><path d="M646 426.5 H654 L658 430.5 V441 H646Z" fill="#f2f2f2" stroke="#cfcfcf" stroke-width="0.8"/><path d="M642 430.5 H650 L654 434.5 V446.5 H642Z" fill="#f4f4f4" stroke="#c8c8c8" stroke-width="0.8"/><rect x="675" y="426" width="16" height="20.5" rx="1" fill="#e9e9e6" stroke="#cbcbc5" stroke-width="0.8"/><rect x="678" y="429" width="10" height="15" fill="#f6f6f6" stroke="#d0d0d0" stroke-width="0.6"/><rect x="719" y="432" width="13.7" height="13.9" fill="#fbe54a" stroke="#c9a82a" stroke-width="0.8"/><path transform="translate(713.3,425.3) scale(1.000,1.000)" d="M10.3 2.6 Q8.5 0.6 5.8 0.8 Q2 1 2 4.2 Q2.2 7 6 7.3 H8.2 M6 7.3 Q1 7.4 1 11 Q1.2 14.3 5.6 14.3 Q9 14.3 11 12" fill="none" stroke="#5b2a66" stroke-width="2" stroke-linecap="round"/><rect x="746" y="426.5" width="19.5" height="5" fill="#fbe54a" stroke="#c9a82a" stroke-width="0.8"/><rect x="746" y="433.5" width="19.5" height="5" fill="#fbe54a" stroke="#c9a82a" stroke-width="0.8"/><rect x="746" y="440.5" width="19.5" height="5" fill="#fbe54a" stroke="#c9a82a" stroke-width="0.8"/><path d="M779.5 426.5 H798.5 V445.5Z" fill="none" stroke="#8a8a8a" stroke-width="0.9"/><path d="M779.5 426.5 L798.5 445.5 H779.5Z" fill="#fbe54a" stroke="#c9a82a" stroke-width="0.8"/><rect x="812.5" y="426.5" width="13" height="13" fill="#fbe54a" stroke="#c9a82a" stroke-width="0.8"/><rect x="823" y="437" width="11" height="10.7" rx="2" fill="#d9262e"/><circle cx="828.5" cy="442.3" r="3" fill="none" stroke="#fff" stroke-width="1"/><path d="M826.5 444.3 L830.5 440.3" stroke="#fff" stroke-width="1"/><path d="M845 425 H865 V429 L857 436.5 V447 L852.8 444.5 V436.5 L845 429Z" fill="#6f9bd2" stroke="#3f5f8a" stroke-width="0.9"/><rect x="845.7" y="425.8" width="18.6" height="3" fill="#fbe54a"/><rect x="878.5" y="426.5" width="19" height="19" fill="#b8d2ee" stroke="#5b87c0" stroke-width="0.9"/><rect x="880" y="439.5" width="16" height="4.5" fill="#fbe54a" stroke="#c9a82a" stroke-width="0.6"/><path d="M886.5 438 V432 H883 L888 427.5 L893 432 H889.5 V438Z" fill="#4f80bf"/><rect x="911" y="426" width="13.7" height="13.6" fill="#fbe54a" stroke="#c9a82a" stroke-width="0.8"/><path d="M920.4 424.8 L925 429 H922 V433.5 H926.5 V430.5 L931.8 435.8 L926.5 441 V438 H922 V442.5 H925 L920.4 446.8 L915.8 442.5 H918.8 V438 H914.3 V441 L909 435.8 L914.3 430.5 V433.5 H918.8 V429 H915.8Z" fill="#6f9bd2" stroke="#3f5f8a" stroke-width="0.6"/><rect x="944.4" y="426" width="11" height="13.6" fill="#fbe54a" stroke="#c9a82a" stroke-width="0.8"/><path d="M943 446.5 L950.5 439" stroke="#444" stroke-width="3"/><path d="M943.5 446 L950 439.5" stroke="#e0b030" stroke-width="1.5"/><circle cx="956" cy="432.5" r="8.5" fill="#f4f2e4" fill-opacity="0.85" stroke="#8a8a8a" stroke-width="1.2"/><path d="M956 424.5 A8 8 0 0 1 956 440.5Z" fill="#fff" fill-opacity="0.8"/><rect x="984.3" y="426" width="19" height="19" fill="#f0f0ee" stroke="#d8d8d5" stroke-width="0.8"/><rect x="988.3" y="425.2" width="5" height="21.5" rx="1" fill="#dedad2" stroke="#cbc7bf" stroke-width="0.6"/><rect x="994.8" y="436.5" width="10.5" height="11" rx="2" fill="#d2cfc5"/><rect x="1017.2" y="426" width="19" height="19" fill="#f0f0ee" stroke="#d8d8d5" stroke-width="0.8"/><rect x="1021.2" y="425.2" width="5" height="21.5" rx="1" fill="#dedad2" stroke="#cbc7bf" stroke-width="0.6"/><rect x="1027.7" y="436.5" width="10.5" height="11" rx="2" fill="#d2cfc5"/><rect x="1050.9" y="426.5" width="18.5" height="18.5" fill="#fff" stroke="#5b8ac6" stroke-width="1"/><rect x="1051.4" y="427" width="17.5" height="3.5" fill="#b8d2ee"/><rect x="1054" y="433.5" width="12" height="1.2" fill="#5b8ac6"/><rect x="1054" y="437.0" width="12" height="1.2" fill="#5b8ac6"/><rect x="1054" y="440.5" width="12" height="1.2" fill="#5b8ac6"/><path d="M1066 425.5 L1069.5 428 L1057.5 444.5 L1053.3 447 L1054 442Z" fill="#e86a1e" stroke="#7a3a10" stroke-width="0.6"/><path d="M1083.5 426 V446 M1102.5 426 V446 M1083.5 431 H1102.5 M1083.5 436 H1102.5 M1083.5 441 H1102.5" stroke="#333" stroke-width="1"/><rect x="1082.5" y="444.5" width="21" height="2.3" fill="#666"/><circle cx="1090.5" cy="428.5" r="2.3" fill="#e04545"/><circle cx="1098.5" cy="428.5" r="2.3" fill="#e04545"/><circle cx="1088.5" cy="434" r="2.3" fill="#7ec87a"/><circle cx="1093.5" cy="434" r="2.3" fill="#7ec87a"/><circle cx="1088.5" cy="439.5" r="2.3" fill="#7cb0e0"/><circle cx="1093.5" cy="439.5" r="2.3" fill="#7cb0e0"/><circle cx="1098.5" cy="439.5" r="2.3" fill="#7cb0e0"/><rect x="1123.8" y="426.5" width="18.7" height="5" rx="1" fill="#fff" stroke="#888" stroke-width="0.8"/><rect x="1130" y="428.5" width="10" height="1.2" fill="#555"/><rect x="1123.8" y="433.5" width="18.7" height="5" rx="1" fill="#c8eec0" stroke="#4c9a44" stroke-width="0.8"/><rect x="1130" y="435.5" width="10" height="1.2" fill="#555"/><rect x="1123.8" y="440.5" width="18.7" height="5" rx="1" fill="#fff" stroke="#888" stroke-width="0.8"/><rect x="1125.5" y="442.3" width="2.5" height="1.6" fill="#b00"/><rect x="1129" y="442.5" width="11" height="1.2" fill="#f0a0a8"/><circle cx="1171" cy="434" r="8.6" fill="#e8e8e8" stroke="#9a9a9a" stroke-width="1.6" stroke-dasharray="2.2,1.2"/><circle cx="1171" cy="434" r="5.7" fill="#5a8fcf" stroke="#2f5a90" stroke-width="0.7"/><path d="M1169 431 V437 L1174 434Z" fill="#fff"/><path d="M1175 436 L1184 443 L1180.5 443.5 L1182.5 447.5 L1181 448 L1179 444.3 L1176.5 446.5Z" fill="#fff" stroke="#666" stroke-width="0.7"/><rect x="1190.5" y="421.5" width="31" height="30" rx="3" fill="#dcdcdc" stroke="#a9a9a9"/><rect x="1198.5" y="426.5" width="16.8" height="16" fill="#fff" stroke="#444" stroke-width="0.9"/><rect x="1198.5" y="426.5" width="16.8" height="3" fill="#555"/><rect x="1196.2" y="434" width="12.8" height="11" fill="#d2e4f6" stroke="#555" stroke-width="0.9"/><rect x="1198" y="437.0" width="3" height="1.1" fill="#5b8ac6"/><rect x="1202.5" y="437.0" width="5" height="1.1" fill="#5b8ac6"/><rect x="1198" y="439.5" width="3" height="1.1" fill="#5b8ac6"/><rect x="1202.5" y="439.5" width="5" height="1.1" fill="#5b8ac6"/><rect x="1198" y="442.0" width="3" height="1.1" fill="#5b8ac6"/><rect x="1202.5" y="442.0" width="5" height="1.1" fill="#5b8ac6"/></svg><svg class="a" style="left:966px;top:394px" width="16" height="2"><rect x="0" y="0" width="1" height="1" fill="#9a9a9a"/><rect x="3" y="0" width="1" height="1" fill="#9a9a9a"/><rect x="6" y="0" width="1" height="1" fill="#9a9a9a"/><rect x="9" y="0" width="1" height="1" fill="#9a9a9a"/><rect x="12" y="0" width="1" height="1" fill="#9a9a9a"/><rect x="15" y="0" width="1" height="1" fill="#9a9a9a"/></svg><div class="a" style="left:392px;top:456px;width:1163px;height:190px;background:#fff;border:1px solid #bdbdbd;border-bottom:none"></div><div class="a" style="left:393px;top:457px;width:1146px;height:21px;background:linear-gradient(#f4f4f4,#ebebeb);border-bottom:1px solid #c8c8c8"></div><div class="a" style="left:393px;top:457px;width:22px;height:21px;border-right:1px solid #c8c8c8"></div><div class="hc" style="left:415px;top:458px;width:100px;text-align:center">ogc_fid</div><div class="hc" style="left:515px;top:458px;width:100px;text-align:center">receptor_id</div><div class="hc" style="left:615px;top:458px;width:100px;padding-left:3px">ncentration_n</div><div class="hc" style="left:715px;top:458px;width:100px;padding-left:3px">ncentration_n</div><div class="hc" style="left:815px;top:458px;width:100px;padding-left:3px">ncentration_n</div><div class="hc" style="left:915px;top:458px;width:100px;padding-left:3px">centration_pn</div><div class="hc" style="left:1015px;top:458px;width:100px;padding-left:3px">centration_pn</div><div class="hc" style="left:1115px;top:458px;width:100px;padding-left:3px">edance_days_p</div><div class="hc" style="left:1215px;top:458px;width:100px;padding-left:3px">edance_days_p</div><div class="hc" style="left:1315px;top:458px;width:100px;padding-left:3px">dance_hours_</div><div class="hc" style="left:1415px;top:458px;width:100px;padding-left:3px">dance_hours_</div><div class="a" style="left:393px;top:478px;width:1121px;height:30px;background:#fff"></div><div class="a" style="left:393px;top:478px;width:22px;height:30px;background:linear-gradient(#f7f7f7,#ebebeb);border-right:2px solid #bdbdbd;border-bottom:1px solid #c8c8c8;font-size:15px;line-height:32px;padding-left:3px">1</div><div class="cell" style="left:415px;top:478px;width:100px;line-height:30px;padding-right:3px">1</div><div class="cell" style="left:515px;top:478px;width:100px;line-height:30px;padding-right:3px">6532320</div><div class="cell" style="left:615px;top:478px;width:100px;line-height:30px;padding-right:3px">0,0451913</div><div class="cell" style="left:715px;top:478px;width:100px;line-height:30px;padding-right:3px">0,02532214</div><div class="cell" style="left:815px;top:478px;width:100px;line-height:30px;padding-right:3px">0,00477532</div><div class="cell nul" style="left:915px;top:478px;width:100px;line-height:30px;padding-right:3px">NULL</div><div class="cell nul" style="left:1015px;top:478px;width:100px;line-height:30px;padding-right:3px">NULL</div><div class="cell nul" style="left:1115px;top:478px;width:100px;line-height:30px;padding-right:3px">NULL</div><div class="cell nul" style="left:1215px;top:478px;width:100px;line-height:30px;padding-right:3px">NULL</div><div class="cell nul" style="left:1315px;top:478px;width:100px;line-height:30px;padding-right:3px">NULL</div><div class="cell nul" style="left:1415px;top:478px;width:100px;line-height:30px;padding-right:3px">NULL</div><div class="a" style="left:393px;top:508px;width:1121px;height:30px;background:#f7f7f7"></div><div class="a" style="left:393px;top:508px;width:22px;height:30px;background:linear-gradient(#f7f7f7,#ebebeb);border-right:2px solid #bdbdbd;border-bottom:1px solid #c8c8c8;font-size:15px;line-height:32px;padding-left:3px">2</div><div class="cell" style="left:415px;top:508px;width:100px;line-height:30px;padding-right:3px">2</div><div class="cell" style="left:515px;top:508px;width:100px;line-height:30px;padding-right:3px">6530535</div><div class="cell" style="left:615px;top:508px;width:100px;line-height:30px;padding-right:3px">0,0480221</div><div class="cell" style="left:715px;top:508px;width:100px;line-height:30px;padding-right:3px">0,026909461</div><div class="cell" style="left:815px;top:508px;width:100px;line-height:30px;padding-right:3px">0,00507251</div><div class="cell nul" style="left:915px;top:508px;width:100px;line-height:30px;padding-right:3px">NULL</div><div class="cell nul" style="left:1015px;top:508px;width:100px;line-height:30px;padding-right:3px">NULL</div><div class="cell nul" style="left:1115px;top:508px;width:100px;line-height:30px;padding-right:3px">NULL</div><div class="cell nul" style="left:1215px;top:508px;width:100px;line-height:30px;padding-right:3px">NULL</div><div class="cell nul" style="left:1315px;top:508px;width:100px;line-height:30px;padding-right:3px">NULL</div><div class="cell nul" style="left:1415px;top:508px;width:100px;line-height:30px;padding-right:3px">NULL</div><div class="a" style="left:393px;top:538px;width:1121px;height:30px;background:#fff"></div><div class="a" style="left:393px;top:538px;width:22px;height:30px;background:linear-gradient(#f7f7f7,#ebebeb);border-right:2px solid #bdbdbd;border-bottom:1px solid #c8c8c8;font-size:15px;line-height:32px;padding-left:3px">3</div><div class="cell" style="left:415px;top:538px;width:100px;line-height:30px;padding-right:3px">3</div><div class="cell" style="left:515px;top:538px;width:100px;line-height:30px;padding-right:3px">6530534</div><div class="cell" style="left:615px;top:538px;width:100px;line-height:30px;padding-right:3px">0,0582402</div><div class="cell" style="left:715px;top:538px;width:100px;line-height:30px;padding-right:3px">0,03263458</div><div class="cell" style="left:815px;top:538px;width:100px;line-height:30px;padding-right:3px">0,00614482</div><div class="cell nul" style="left:915px;top:538px;width:100px;line-height:30px;padding-right:3px">NULL</div><div class="cell nul" style="left:1015px;top:538px;width:100px;line-height:30px;padding-right:3px">NULL</div><div class="cell nul" style="left:1115px;top:538px;width:100px;line-height:30px;padding-right:3px">NULL</div><div class="cell nul" style="left:1215px;top:538px;width:100px;line-height:30px;padding-right:3px">NULL</div><div class="cell nul" style="left:1315px;top:538px;width:100px;line-height:30px;padding-right:3px">NULL</div><div class="cell nul" style="left:1415px;top:538px;width:100px;line-height:30px;padding-right:3px">NULL</div><div class="a" style="left:393px;top:568px;width:1121px;height:30px;background:#f7f7f7"></div><div class="a" style="left:393px;top:568px;width:22px;height:30px;background:linear-gradient(#f7f7f7,#ebebeb);border-right:2px solid #bdbdbd;border-bottom:1px solid #c8c8c8;font-size:15px;line-height:32px;padding-left:3px">4</div><div class="cell" style="left:415px;top:568px;width:100px;line-height:30px;padding-right:3px">4</div><div class="cell" style="left:515px;top:568px;width:100px;line-height:30px;padding-right:3px">6530533</div><div class="cell" style="left:615px;top:568px;width:100px;line-height:30px;padding-right:3px">0,0744073</div><div class="cell" style="left:715px;top:568px;width:100px;line-height:30px;padding-right:3px">0,041688245</div><div class="cell" style="left:815px;top:568px;width:100px;line-height:30px;padding-right:3px">0,007839125</div><div class="cell nul" style="left:915px;top:568px;width:100px;line-height:30px;padding-right:3px">NULL</div><div class="cell nul" style="left:1015px;top:568px;width:100px;line-height:30px;padding-right:3px">NULL</div><div class="cell nul" style="left:1115px;top:568px;width:100px;line-height:30px;padding-right:3px">NULL</div><div class="cell nul" style="left:1215px;top:568px;width:100px;line-height:30px;padding-right:3px">NULL</div><div class="cell nul" style="left:1315px;top:568px;width:100px;line-height:30px;padding-right:3px">NULL</div><div class="cell nul" style="left:1415px;top:568px;width:100px;line-height:30px;padding-right:3px">NULL</div><div class="a" style="left:393px;top:598px;width:1121px;height:30px;background:#fff"></div><div class="a" style="left:393px;top:598px;width:22px;height:30px;background:linear-gradient(#f7f7f7,#ebebeb);border-right:2px solid #bdbdbd;border-bottom:1px solid #c8c8c8;font-size:15px;line-height:32px;padding-left:3px">5</div><div class="cell" style="left:415px;top:598px;width:100px;line-height:30px;padding-right:3px">5</div><div class="cell" style="left:515px;top:598px;width:100px;line-height:30px;padding-right:3px">6528747</div><div class="cell" style="left:615px;top:598px;width:100px;line-height:30px;padding-right:3px">0,0804531</div><div class="cell" style="left:715px;top:598px;width:100px;line-height:30px;padding-right:3px">0,045062628</div><div class="cell" style="left:815px;top:598px;width:100px;line-height:30px;padding-right:3px">0,00847032</div><div class="cell nul" style="left:915px;top:598px;width:100px;line-height:30px;padding-right:3px">NULL</div><div class="cell nul" style="left:1015px;top:598px;width:100px;line-height:30px;padding-right:3px">NULL</div><div class="cell nul" style="left:1115px;top:598px;width:100px;line-height:30px;padding-right:3px">NULL</div><div class="cell nul" style="left:1215px;top:598px;width:100px;line-height:30px;padding-right:3px">NULL</div><div class="cell nul" style="left:1315px;top:598px;width:100px;line-height:30px;padding-right:3px">NULL</div><div class="cell nul" style="left:1415px;top:598px;width:100px;line-height:30px;padding-right:3px">NULL</div><div class="a" style="left:393px;top:628px;width:1121px;height:30px;background:#f7f7f7"></div><div class="a" style="left:393px;top:628px;width:22px;height:30px;background:linear-gradient(#f7f7f7,#ebebeb);border-right:2px solid #bdbdbd;border-bottom:1px solid #c8c8c8;font-size:15px;line-height:32px;padding-left:3px">6</div><div class="cell" style="left:415px;top:628px;width:100px;line-height:30px;padding-right:3px">6</div><div class="cell" style="left:515px;top:628px;width:100px;line-height:30px;padding-right:3px">6539459</div><div class="cell" style="left:615px;top:628px;width:100px;line-height:30px;padding-right:3px">0,06635045</div><div class="cell" style="left:715px;top:628px;width:100px;line-height:30px;padding-right:3px">0,037178475</div><div class="cell" style="left:815px;top:628px;width:100px;line-height:30px;padding-right:3px">0,00700329</div><div class="cell nul" style="left:915px;top:628px;width:100px;line-height:30px;padding-right:3px">NULL</div><div class="cell nul" style="left:1015px;top:628px;width:100px;line-height:30px;padding-right:3px">NULL</div><div class="cell nul" style="left:1115px;top:628px;width:100px;line-height:30px;padding-right:3px">NULL</div><div class="cell nul" style="left:1215px;top:628px;width:100px;line-height:30px;padding-right:3px">NULL</div><div class="cell nul" style="left:1315px;top:628px;width:100px;line-height:30px;padding-right:3px">NULL</div><div class="cell nul" style="left:1415px;top:628px;width:100px;line-height:30px;padding-right:3px">NULL</div><div class="a" style="left:1539px;top:457px;width:15px;height:189px;background:#e6e6e6;border-left:1px solid #c8c8c8"></div><div class="a" style="left:1539px;top:457px;width:15px;height:15px;background:#f2f2f2;border-left:1px solid #c8c8c8;border-bottom:1px solid #c8c8c8"></div><svg class="a" style="left:1542px;top:461px" width="10" height="6"><path d="M0.5 5.5 H9.5 L5 0.5Z" fill="#555"/></svg><div class="a" style="left:1540px;top:472px;width:14px;height:41px;background:#fafafa;border-bottom:1px solid #c8c8c8"></div><svg class="a" style="left:1556px;top:401px" width="2" height="18"><rect x="0" y="0" width="1" height="1" fill="#a0a0a0"/><rect x="0" y="3" width="1" height="1" fill="#a0a0a0"/><rect x="0" y="6" width="1" height="1" fill="#a0a0a0"/><rect x="0" y="9" width="1" height="1" fill="#a0a0a0"/><rect x="0" y="12" width="1" height="1" fill="#a0a0a0"/><rect x="0" y="15" width="1" height="1" fill="#a0a0a0"/></svg>
</body></html>
